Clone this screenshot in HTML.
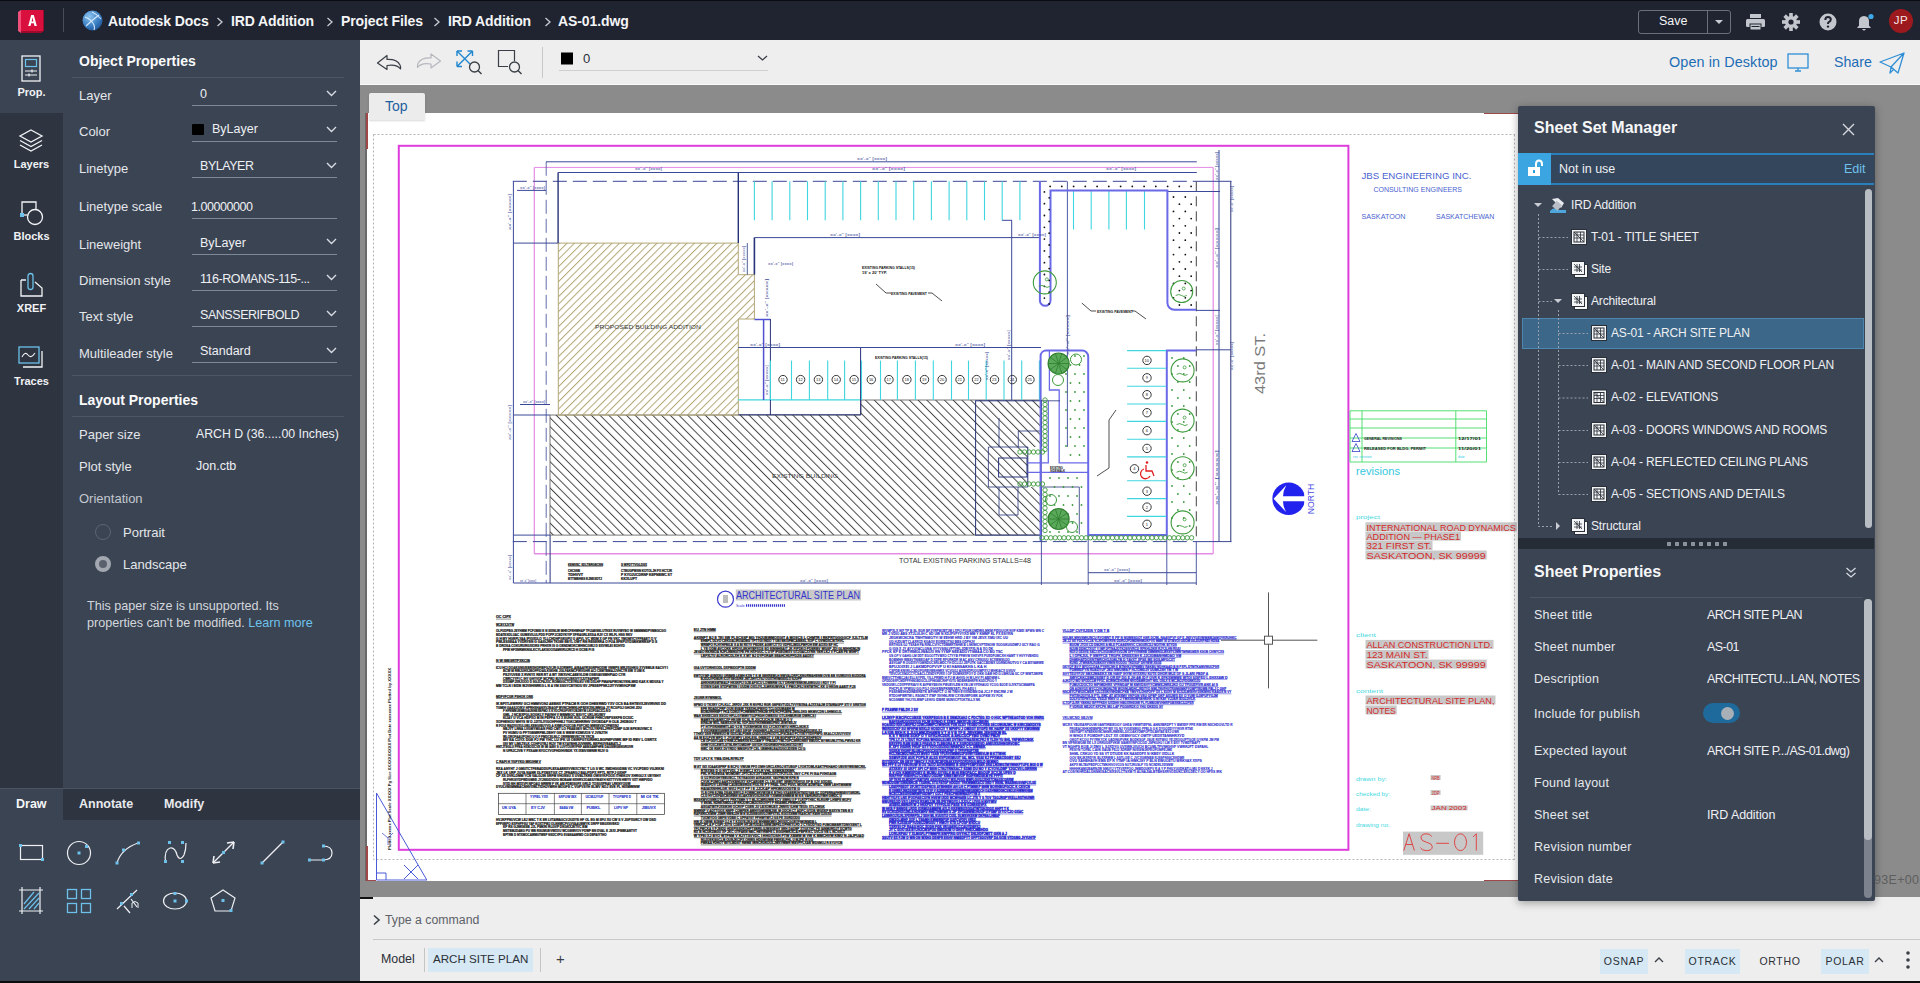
<!DOCTYPE html>
<html><head><meta charset="utf-8">
<style>
*{margin:0;padding:0;box-sizing:border-box}
html,body{width:1920px;height:983px;overflow:hidden;background:#8b8b8b;font-family:"Liberation Sans",sans-serif}
.a{position:absolute;white-space:nowrap}
#hdr{left:0;top:0;width:1920px;height:40px;background:#1f2430;border-top:1px solid #0b0d12}
.crumb{color:#f4f5f7;font-weight:bold;font-size:14px;top:12px;letter-spacing:-0.1px}
.chev{color:#c9ccd2;font-size:13px;top:12px}
#rail{left:0;top:40px;width:63px;height:748px;background:#2e3440}
#panel{left:63px;top:40px;width:297px;height:748px;background:#3b4453}
#ptabs{left:0;top:788px;width:360px;height:32px;background:#2e3440;border-top:1px solid #4a5361}
#pbot{left:0;top:820px;width:360px;height:163px;background:#3b4453}
.rl{color:#f0f2f5;font-size:11px;font-weight:bold;width:63px;text-align:center;left:0}
.lbl{color:#e3e6ea;font-size:13px;left:79px}
.val{color:#eef0f3;font-size:12.5px}
.dd{left:192px;width:145px;height:1px;background:#7f8896}
.sep{background:#4d5665;height:1px}
.h1{color:#fafbfc;font-weight:bold;font-size:14px;left:79px}
#tbar{left:360px;top:40px;width:1560px;height:45px;background:#eeeeee;border-bottom:1px solid #fafafa}
#canvas{left:360px;top:84px;width:1560px;height:813px;background:#8b8b8b}
#paper{left:366px;top:113px;width:1160px;height:768px;background:#ffffff}
#cmd{left:360px;top:897px;width:1560px;height:43px;background:#eeeeee}
#btm{left:360px;top:940px;width:1560px;height:41px;background:#eeeeee}
#ssm{left:1518px;top:106px;width:357px;height:795px;background:#3b4453;box-shadow:0 2px 8px rgba(0,0,0,0.35);border-radius:2px}
.tr{color:#eef0f3;font-size:12px;letter-spacing:-0.15px}
.spl{color:#e6e9ed;font-size:12.5px;left:16px;letter-spacing:0.25px}
.spv{color:#eef0f3;font-size:12.5px;left:189px}
.st{font-size:10.5px;color:#2b2f36;letter-spacing:0.7px;height:25px;line-height:25px;padding:0 6px}
</style></head><body>
<div id="canvas" class="a"></div>
<div id="paper" class="a"></div>
<div class="a" style="left:365px;top:113px;width:2px;height:768px;background:#6a6a6a"></div>
<div class="a" style="left:366px;top:113px;width:1.5px;height:36px;background:#a04848"></div>
<div class="a" style="left:366px;top:846px;width:1.5px;height:35px;background:#a04848"></div>
<div class="a" style="left:366px;top:879.5px;width:10px;height:1.5px;background:#a04848"></div>
<div class="a" style="left:1484px;top:112.5px;width:40px;height:1.5px;background:#a04848"></div>
<div class="a" style="left:1484px;top:879.5px;width:40px;height:1.5px;background:#a04848"></div>
<svg class="a" style="left:366px;top:113px" width="1152" height="768" viewBox="366 113 1152 768" font-family="Liberation Sans, sans-serif">
<path d="M373.5 134.5 H1515 M373.5 134.5 V859.5 H1515 M1514.5 134.5 V859.5" stroke="#b4b4b4" stroke-width="1.00" fill="none" stroke-dasharray="2 2"/>
<rect x="398.8" y="145.8" width="949.6" height="704.0" stroke="#dc3ddc" stroke-width="2.00" fill="none"/>
<defs>
<pattern id="hb" patternUnits="userSpaceOnUse" width="6.2" height="6.2" patternTransform="rotate(-45)"><line x1="0.5" y1="0" x2="0.5" y2="6.2" stroke="#404040" stroke-width="0.95"/></pattern>
<pattern id="ht" patternUnits="userSpaceOnUse" width="5.3" height="5.3" patternTransform="rotate(45)"><line x1="0.5" y1="0" x2="0.5" y2="5.3" stroke="#b3a877" stroke-width="1"/></pattern>
<pattern id="hb2" patternUnits="userSpaceOnUse" width="6.5" height="6.5" patternTransform="rotate(-45)"><line x1="0.5" y1="0" x2="0.5" y2="6.5" stroke="#404040" stroke-width="0.9"/></pattern>
</defs>
<path d="M550 415 H738.3 V415 H861 V400 H1041.4 V535.1 H550 Z" stroke="#555" stroke-width="0.80" fill="url(#hb)"/>
<path d="M558.3 243.1 H738.3 V274.7 H754.4 V319 H738.3 V415 H558.3 Z" stroke="#b3a877" stroke-width="1.00" fill="url(#ht)"/>
<rect x="975.6" y="400.8" width="65.8" height="134.3" stroke="#27327a" stroke-width="1.00" fill="none"/>
<path d="M1027.8 447 H1041.4 V487 H1027.8 Z" stroke="none" stroke-width="0.00" fill="#fff"/>
<path d="M1027.8 447 V487" stroke="#27327a" stroke-width="1.00" fill="none"/>
<rect x="998.6" y="458.0" width="28.4" height="19.0" stroke="#27327a" stroke-width="1.00" fill="none"/>
<path d="M988.4 447 H1027.8 M988.4 447 V487 H1027.8 M1018.3 431 V447 M1018.3 431 H1041 M999 418 V447 M999 487 V515 H1018 V487" stroke="#27327a" stroke-width="0.80" fill="none"/>
<path d="M738.3 399.9 H860.6" stroke="#3fd6df" stroke-width="1.30" fill="none"/>
<path d="M738.3 414.8 H860.6 V347.5" stroke="#27327a" stroke-width="1.00" fill="none"/>
<line x1="763.6" y1="319.0" x2="763.6" y2="400.0" stroke="#5050d0" stroke-width="1.50"/>
<line x1="754.4" y1="319.5" x2="770.4" y2="319.5" stroke="#5050d0" stroke-width="1.50"/>
<line x1="747.3" y1="243.1" x2="747.3" y2="274.7" stroke="#27327a" stroke-width="0.80"/>
<line x1="770.4" y1="319.0" x2="770.4" y2="415.0" stroke="#27327a" stroke-width="1.00"/>
<line x1="546.0" y1="161.8" x2="1196.8" y2="161.8" stroke="#3b4898" stroke-width="1.00"/>
<line x1="534.3" y1="167.4" x2="1213.2" y2="167.4" stroke="#e58ae5" stroke-width="1.00"/>
<line x1="534.3" y1="167.4" x2="534.3" y2="553.8" stroke="#e58ae5" stroke-width="1.20"/>
<line x1="1213.2" y1="167.4" x2="1213.2" y2="553.8" stroke="#e58ae5" stroke-width="1.20"/>
<line x1="534.3" y1="553.8" x2="1213.2" y2="553.8" stroke="#e58ae5" stroke-width="1.50"/>
<line x1="558.1" y1="172.5" x2="1196.8" y2="172.5" stroke="#3b4898" stroke-width="1.00"/>
<path d="M512.8 181.3 H1196.8" stroke="#3b4898" stroke-width="1.00" fill="none" stroke-dasharray="14 6"/>
<line x1="1196.8" y1="181.3" x2="1231.5" y2="181.3" stroke="#3b4898" stroke-width="1.00"/>
<path d="M1196.3 181.3 V541.6" stroke="#444" stroke-width="1.00" fill="none" stroke-dasharray="10 5"/>
<path d="M512.8 541.6 H1196.8" stroke="#3b4898" stroke-width="1.00" fill="none" stroke-dasharray="14 6"/>
<line x1="1196.8" y1="541.6" x2="1231.5" y2="541.6" stroke="#3b4898" stroke-width="1.00"/>
<path d="M546.2 161.8 V583" stroke="#3b4898" stroke-width="0.80" fill="none" stroke-dasharray="14 5"/>
<line x1="513.4" y1="181.3" x2="513.4" y2="583.0" stroke="#3b4898" stroke-width="1.00"/>
<line x1="1219.0" y1="150.0" x2="1219.0" y2="541.6" stroke="#3b4898" stroke-width="1.00"/>
<line x1="1230.8" y1="181.3" x2="1230.8" y2="541.6" stroke="#27327a" stroke-width="1.00"/>
<line x1="558.1" y1="172.5" x2="558.1" y2="243.1" stroke="#27327a" stroke-width="1.40"/>
<line x1="738.3" y1="172.5" x2="738.3" y2="243.1" stroke="#27327a" stroke-width="1.40"/>
<line x1="513.4" y1="243.1" x2="558.3" y2="243.1" stroke="#3b4898" stroke-width="1.00"/>
<line x1="513.4" y1="415.0" x2="550.0" y2="415.0" stroke="#3b4898" stroke-width="1.00"/>
<line x1="513.4" y1="535.1" x2="550.0" y2="535.1" stroke="#3b4898" stroke-width="1.00"/>
<line x1="550.1" y1="535.1" x2="550.1" y2="583.0" stroke="#27327a" stroke-width="1.00"/>
<line x1="517.0" y1="190.4" x2="546.0" y2="190.4" stroke="#3b4898" stroke-width="1.00"/>
<line x1="520.0" y1="404.5" x2="550.0" y2="404.5" stroke="#3b4898" stroke-width="1.00"/>
<line x1="513.4" y1="583.0" x2="1196.3" y2="583.0" stroke="#3b4898" stroke-width="1.00"/>
<line x1="1088.2" y1="572.7" x2="1196.1" y2="572.7" stroke="#3b4898" stroke-width="1.00"/>
<line x1="1041.4" y1="535.1" x2="1041.4" y2="585.0" stroke="#3b4898" stroke-width="0.90"/>
<line x1="1088.2" y1="535.1" x2="1088.2" y2="585.0" stroke="#3b4898" stroke-width="0.90"/>
<line x1="1166.8" y1="535.1" x2="1166.8" y2="585.0" stroke="#3b4898" stroke-width="0.90"/>
<line x1="1196.3" y1="541.6" x2="1196.3" y2="585.0" stroke="#3b4898" stroke-width="0.90"/>
<line x1="754.4" y1="237.6" x2="1039.2" y2="237.6" stroke="#3b4898" stroke-width="1.00"/>
<line x1="754.4" y1="237.6" x2="754.4" y2="274.7" stroke="#27327a" stroke-width="1.60"/>
<line x1="738.3" y1="347.5" x2="1041.0" y2="347.5" stroke="#3b4898" stroke-width="1.00"/>
<line x1="1011.7" y1="220.3" x2="1011.7" y2="400.0" stroke="#3b4898" stroke-width="1.00"/>
<line x1="1002.0" y1="220.3" x2="1012.0" y2="220.3" stroke="#3b4898" stroke-width="1.00"/>
<line x1="1067.4" y1="181.3" x2="1067.4" y2="447.0" stroke="#3b4898" stroke-width="0.90"/>
<line x1="1167.0" y1="191.5" x2="1220.0" y2="191.5" stroke="#3b4898" stroke-width="1.00"/>
<line x1="1196.0" y1="310.4" x2="1220.0" y2="310.4" stroke="#3b4898" stroke-width="1.00"/>
<line x1="1196.0" y1="349.8" x2="1231.0" y2="349.8" stroke="#3b4898" stroke-width="1.00"/>
<line x1="754.4" y1="181.3" x2="754.4" y2="220.3" stroke="#3fd6df" stroke-width="1.10"/>
<line x1="772.1" y1="181.3" x2="772.1" y2="220.3" stroke="#3fd6df" stroke-width="1.10"/>
<line x1="789.8" y1="181.3" x2="789.8" y2="220.3" stroke="#3fd6df" stroke-width="1.10"/>
<line x1="807.5" y1="181.3" x2="807.5" y2="220.3" stroke="#3fd6df" stroke-width="1.10"/>
<line x1="825.2" y1="181.3" x2="825.2" y2="220.3" stroke="#3fd6df" stroke-width="1.10"/>
<line x1="842.9" y1="181.3" x2="842.9" y2="220.3" stroke="#3fd6df" stroke-width="1.10"/>
<line x1="860.6" y1="181.3" x2="860.6" y2="220.3" stroke="#3fd6df" stroke-width="1.10"/>
<line x1="878.3" y1="181.3" x2="878.3" y2="220.3" stroke="#3fd6df" stroke-width="1.10"/>
<line x1="896.0" y1="181.3" x2="896.0" y2="220.3" stroke="#3fd6df" stroke-width="1.10"/>
<line x1="913.7" y1="181.3" x2="913.7" y2="220.3" stroke="#3fd6df" stroke-width="1.10"/>
<line x1="931.4" y1="181.3" x2="931.4" y2="220.3" stroke="#3fd6df" stroke-width="1.10"/>
<line x1="949.1" y1="181.3" x2="949.1" y2="220.3" stroke="#3fd6df" stroke-width="1.10"/>
<line x1="966.8" y1="181.3" x2="966.8" y2="220.3" stroke="#3fd6df" stroke-width="1.10"/>
<line x1="984.5" y1="181.3" x2="984.5" y2="220.3" stroke="#3fd6df" stroke-width="1.10"/>
<line x1="1002.2" y1="181.3" x2="1002.2" y2="220.3" stroke="#3fd6df" stroke-width="1.10"/>
<line x1="1019.9" y1="181.3" x2="1019.9" y2="220.3" stroke="#3fd6df" stroke-width="1.10"/>
<line x1="1073.5" y1="190.4" x2="1073.5" y2="229.5" stroke="#3fd6df" stroke-width="1.10"/>
<line x1="1091.2" y1="190.4" x2="1091.2" y2="229.5" stroke="#3fd6df" stroke-width="1.10"/>
<line x1="1108.9" y1="190.4" x2="1108.9" y2="229.5" stroke="#3fd6df" stroke-width="1.10"/>
<line x1="1126.4" y1="190.4" x2="1126.4" y2="229.5" stroke="#3fd6df" stroke-width="1.10"/>
<line x1="1144.5" y1="190.4" x2="1144.5" y2="229.5" stroke="#3fd6df" stroke-width="1.10"/>
<line x1="770.4" y1="360.6" x2="770.4" y2="399.9" stroke="#3fd6df" stroke-width="1.10"/>
<line x1="791.5" y1="360.6" x2="791.5" y2="399.9" stroke="#3fd6df" stroke-width="1.10"/>
<line x1="809.4" y1="360.6" x2="809.4" y2="399.9" stroke="#3fd6df" stroke-width="1.10"/>
<line x1="827.7" y1="360.6" x2="827.7" y2="399.9" stroke="#3fd6df" stroke-width="1.10"/>
<line x1="844.6" y1="360.6" x2="844.6" y2="399.9" stroke="#3fd6df" stroke-width="1.10"/>
<line x1="861.5" y1="360.6" x2="861.5" y2="399.9" stroke="#3fd6df" stroke-width="1.10"/>
<line x1="880.5" y1="360.6" x2="880.5" y2="399.9" stroke="#3fd6df" stroke-width="1.10"/>
<line x1="897.4" y1="360.6" x2="897.4" y2="399.9" stroke="#3fd6df" stroke-width="1.10"/>
<line x1="915.4" y1="360.6" x2="915.4" y2="399.9" stroke="#3fd6df" stroke-width="1.10"/>
<line x1="933.3" y1="360.6" x2="933.3" y2="399.9" stroke="#3fd6df" stroke-width="1.10"/>
<line x1="951.5" y1="360.6" x2="951.5" y2="399.9" stroke="#3fd6df" stroke-width="1.10"/>
<line x1="968.5" y1="360.6" x2="968.5" y2="399.9" stroke="#3fd6df" stroke-width="1.10"/>
<line x1="986.2" y1="360.6" x2="986.2" y2="399.9" stroke="#3fd6df" stroke-width="1.10"/>
<line x1="1004.0" y1="360.6" x2="1004.0" y2="399.9" stroke="#3fd6df" stroke-width="1.10"/>
<line x1="1021.7" y1="360.6" x2="1021.7" y2="399.9" stroke="#3fd6df" stroke-width="1.10"/>
<line x1="1039.4" y1="360.6" x2="1039.4" y2="399.9" stroke="#3fd6df" stroke-width="1.10"/>
<circle cx="783.0" cy="379.6" r="4.2" fill="none" stroke="#222" stroke-width="0.9"/>
<text x="780.6" y="381.4" font-size="4.0" fill="#222">11</text>
<circle cx="800.6" cy="379.6" r="4.2" fill="none" stroke="#222" stroke-width="0.9"/>
<text x="798.2" y="381.4" font-size="4.0" fill="#222">12</text>
<circle cx="818.4" cy="379.6" r="4.2" fill="none" stroke="#222" stroke-width="0.9"/>
<text x="816.0" y="381.4" font-size="4.0" fill="#222">13</text>
<circle cx="836.2" cy="379.6" r="4.2" fill="none" stroke="#222" stroke-width="0.9"/>
<text x="833.8" y="381.4" font-size="4.0" fill="#222">14</text>
<circle cx="854.1" cy="379.6" r="4.2" fill="none" stroke="#222" stroke-width="0.9"/>
<text x="851.7" y="381.4" font-size="4.0" fill="#222">15</text>
<circle cx="871.3" cy="379.6" r="4.2" fill="none" stroke="#222" stroke-width="0.9"/>
<text x="868.9" y="381.4" font-size="4.0" fill="#222">16</text>
<circle cx="889.0" cy="379.6" r="4.2" fill="none" stroke="#222" stroke-width="0.9"/>
<text x="886.6" y="381.4" font-size="4.0" fill="#222">17</text>
<circle cx="906.9" cy="379.6" r="4.2" fill="none" stroke="#222" stroke-width="0.9"/>
<text x="904.5" y="381.4" font-size="4.0" fill="#222">18</text>
<circle cx="924.5" cy="379.6" r="4.2" fill="none" stroke="#222" stroke-width="0.9"/>
<text x="922.1" y="381.4" font-size="4.0" fill="#222">19</text>
<circle cx="942.1" cy="379.6" r="4.2" fill="none" stroke="#222" stroke-width="0.9"/>
<text x="939.7" y="381.4" font-size="4.0" fill="#222">20</text>
<circle cx="960.0" cy="379.6" r="4.2" fill="none" stroke="#222" stroke-width="0.9"/>
<text x="957.6" y="381.4" font-size="4.0" fill="#222">21</text>
<circle cx="976.6" cy="379.6" r="4.2" fill="none" stroke="#222" stroke-width="0.9"/>
<text x="974.2" y="381.4" font-size="4.0" fill="#222">22</text>
<circle cx="994.5" cy="379.6" r="4.2" fill="none" stroke="#222" stroke-width="0.9"/>
<text x="992.1" y="381.4" font-size="4.0" fill="#222">23</text>
<circle cx="1012.3" cy="379.6" r="4.2" fill="none" stroke="#222" stroke-width="0.9"/>
<text x="1009.9" y="381.4" font-size="4.0" fill="#222">24</text>
<circle cx="1030.0" cy="379.6" r="4.2" fill="none" stroke="#222" stroke-width="0.9"/>
<text x="1027.6" y="381.4" font-size="4.0" fill="#222">25</text>
<path d="M1039.9 181.3 V300.5 A5.3 5.3 0 0 0 1050.5 300.5 V190.4 H1167.4 V302.7 A7 7 0 0 0 1174.4 309.8 H1196" stroke="#6a6ae8" stroke-width="2.00" fill="none"/>
<path d="M1040.6 541 V356 A5.5 5.5 0 0 1 1046 350.6 H1082 A6 6 0 0 1 1088.2 356.6 V535.1 H1166.8 V350.6 H1196" stroke="#6a6ae8" stroke-width="2.00" fill="none"/>
<path d="M1049.4 350.6 V390 H1059.2 V462.8 H1088.2 M1027.8 472.3 H1088.2 M1027.8 462.8 H1048.3 V400.8" stroke="#6a6ae8" stroke-width="1.30" fill="none"/>
<path d="M1042 487 H1079.3 V534.3" stroke="#27327a" stroke-width="0.80" fill="none"/>
<path d="M1040.6 400.8 H1060" stroke="#27327a" stroke-width="0.80" fill="none"/>
<circle cx="1044.4" cy="191.9" r="0.9" fill="#111"/>
<circle cx="1049.2" cy="197.8" r="0.9" fill="#111"/>
<circle cx="1044.4" cy="203.7" r="0.9" fill="#111"/>
<circle cx="1049.2" cy="209.6" r="0.9" fill="#111"/>
<circle cx="1044.4" cy="215.5" r="0.9" fill="#111"/>
<circle cx="1049.2" cy="221.4" r="0.9" fill="#111"/>
<circle cx="1044.4" cy="227.3" r="0.9" fill="#111"/>
<circle cx="1049.2" cy="233.2" r="0.9" fill="#111"/>
<circle cx="1044.4" cy="239.1" r="0.9" fill="#111"/>
<circle cx="1049.2" cy="245.0" r="0.9" fill="#111"/>
<circle cx="1044.4" cy="250.9" r="0.9" fill="#111"/>
<circle cx="1049.2" cy="256.8" r="0.9" fill="#111"/>
<circle cx="1044.4" cy="262.7" r="0.9" fill="#111"/>
<circle cx="1049.2" cy="268.6" r="0.9" fill="#111"/>
<circle cx="1044.4" cy="274.5" r="0.9" fill="#111"/>
<circle cx="1049.2" cy="280.4" r="0.9" fill="#111"/>
<circle cx="1044.4" cy="286.3" r="0.9" fill="#111"/>
<circle cx="1049.2" cy="292.2" r="0.9" fill="#111"/>
<circle cx="1044.4" cy="298.1" r="0.9" fill="#111"/>
<circle cx="1049.2" cy="304.0" r="0.9" fill="#111"/>
<circle cx="1050.1" cy="186.4" r="0.9" fill="#111"/>
<circle cx="1061.8" cy="186.4" r="0.9" fill="#111"/>
<circle cx="1073.6" cy="186.4" r="0.9" fill="#111"/>
<circle cx="1085.3" cy="186.4" r="0.9" fill="#111"/>
<circle cx="1097.1" cy="186.4" r="0.9" fill="#111"/>
<circle cx="1108.8" cy="186.4" r="0.9" fill="#111"/>
<circle cx="1120.6" cy="186.4" r="0.9" fill="#111"/>
<circle cx="1132.3" cy="186.4" r="0.9" fill="#111"/>
<circle cx="1144.1" cy="186.4" r="0.9" fill="#111"/>
<circle cx="1155.8" cy="186.4" r="0.9" fill="#111"/>
<circle cx="1167.6" cy="186.4" r="0.9" fill="#111"/>
<circle cx="1179.3" cy="186.4" r="0.9" fill="#111"/>
<circle cx="1191.1" cy="186.4" r="0.9" fill="#111"/>
<circle cx="1173.5" cy="197.0" r="0.9" fill="#111"/>
<circle cx="1185.3" cy="197.0" r="0.9" fill="#111"/>
<circle cx="1179.4" cy="204.2" r="0.9" fill="#111"/>
<circle cx="1191.2" cy="204.2" r="0.9" fill="#111"/>
<circle cx="1173.5" cy="211.4" r="0.9" fill="#111"/>
<circle cx="1185.3" cy="211.4" r="0.9" fill="#111"/>
<circle cx="1179.4" cy="218.6" r="0.9" fill="#111"/>
<circle cx="1191.2" cy="218.6" r="0.9" fill="#111"/>
<circle cx="1173.5" cy="225.8" r="0.9" fill="#111"/>
<circle cx="1185.3" cy="225.8" r="0.9" fill="#111"/>
<circle cx="1179.4" cy="233.0" r="0.9" fill="#111"/>
<circle cx="1191.2" cy="233.0" r="0.9" fill="#111"/>
<circle cx="1173.5" cy="240.2" r="0.9" fill="#111"/>
<circle cx="1185.3" cy="240.2" r="0.9" fill="#111"/>
<circle cx="1179.4" cy="247.4" r="0.9" fill="#111"/>
<circle cx="1191.2" cy="247.4" r="0.9" fill="#111"/>
<circle cx="1173.5" cy="254.6" r="0.9" fill="#111"/>
<circle cx="1185.3" cy="254.6" r="0.9" fill="#111"/>
<circle cx="1179.4" cy="261.8" r="0.9" fill="#111"/>
<circle cx="1191.2" cy="261.8" r="0.9" fill="#111"/>
<circle cx="1173.5" cy="269.0" r="0.9" fill="#111"/>
<circle cx="1185.3" cy="269.0" r="0.9" fill="#111"/>
<circle cx="1179.4" cy="276.2" r="0.9" fill="#111"/>
<circle cx="1191.2" cy="276.2" r="0.9" fill="#111"/>
<circle cx="1173.5" cy="283.4" r="0.9" fill="#111"/>
<circle cx="1185.3" cy="283.4" r="0.9" fill="#111"/>
<circle cx="1179.4" cy="290.6" r="0.9" fill="#111"/>
<circle cx="1191.2" cy="290.6" r="0.9" fill="#111"/>
<circle cx="1173.5" cy="297.8" r="0.9" fill="#111"/>
<circle cx="1185.3" cy="297.8" r="0.9" fill="#111"/>
<circle cx="1179.4" cy="305.0" r="0.9" fill="#111"/>
<circle cx="1191.2" cy="305.0" r="0.9" fill="#111"/>
<circle cx="1066.0" cy="356.0" r="0.9" fill="#3d9a3d"/>
<circle cx="1075.0" cy="356.0" r="0.9" fill="#3d9a3d"/>
<circle cx="1084.0" cy="356.0" r="0.9" fill="#3d9a3d"/>
<circle cx="1070.5" cy="365.0" r="0.9" fill="#3d9a3d"/>
<circle cx="1079.5" cy="365.0" r="0.9" fill="#3d9a3d"/>
<circle cx="1066.0" cy="374.0" r="0.9" fill="#3d9a3d"/>
<circle cx="1075.0" cy="374.0" r="0.9" fill="#3d9a3d"/>
<circle cx="1084.0" cy="374.0" r="0.9" fill="#3d9a3d"/>
<circle cx="1070.5" cy="383.0" r="0.9" fill="#3d9a3d"/>
<circle cx="1079.5" cy="383.0" r="0.9" fill="#3d9a3d"/>
<circle cx="1066.0" cy="392.0" r="0.9" fill="#3d9a3d"/>
<circle cx="1075.0" cy="392.0" r="0.9" fill="#3d9a3d"/>
<circle cx="1084.0" cy="392.0" r="0.9" fill="#3d9a3d"/>
<circle cx="1070.5" cy="401.0" r="0.9" fill="#3d9a3d"/>
<circle cx="1079.5" cy="401.0" r="0.9" fill="#3d9a3d"/>
<circle cx="1066.0" cy="410.0" r="0.9" fill="#3d9a3d"/>
<circle cx="1075.0" cy="410.0" r="0.9" fill="#3d9a3d"/>
<circle cx="1084.0" cy="410.0" r="0.9" fill="#3d9a3d"/>
<circle cx="1070.5" cy="419.0" r="0.9" fill="#3d9a3d"/>
<circle cx="1079.5" cy="419.0" r="0.9" fill="#3d9a3d"/>
<circle cx="1066.0" cy="428.0" r="0.9" fill="#3d9a3d"/>
<circle cx="1075.0" cy="428.0" r="0.9" fill="#3d9a3d"/>
<circle cx="1084.0" cy="428.0" r="0.9" fill="#3d9a3d"/>
<circle cx="1070.5" cy="437.0" r="0.9" fill="#3d9a3d"/>
<circle cx="1079.5" cy="437.0" r="0.9" fill="#3d9a3d"/>
<circle cx="1066.0" cy="446.0" r="0.9" fill="#3d9a3d"/>
<circle cx="1075.0" cy="446.0" r="0.9" fill="#3d9a3d"/>
<circle cx="1084.0" cy="446.0" r="0.9" fill="#3d9a3d"/>
<circle cx="1070.5" cy="455.0" r="0.9" fill="#3d9a3d"/>
<circle cx="1079.5" cy="455.0" r="0.9" fill="#3d9a3d"/>
<circle cx="1172.0" cy="358.0" r="0.9" fill="#3d9a3d"/>
<circle cx="1183.8" cy="358.0" r="0.9" fill="#3d9a3d"/>
<circle cx="1177.9" cy="366.0" r="0.9" fill="#3d9a3d"/>
<circle cx="1189.7" cy="366.0" r="0.9" fill="#3d9a3d"/>
<circle cx="1172.0" cy="374.0" r="0.9" fill="#3d9a3d"/>
<circle cx="1183.8" cy="374.0" r="0.9" fill="#3d9a3d"/>
<circle cx="1177.9" cy="382.0" r="0.9" fill="#3d9a3d"/>
<circle cx="1189.7" cy="382.0" r="0.9" fill="#3d9a3d"/>
<circle cx="1172.0" cy="390.0" r="0.9" fill="#3d9a3d"/>
<circle cx="1183.8" cy="390.0" r="0.9" fill="#3d9a3d"/>
<circle cx="1177.9" cy="398.0" r="0.9" fill="#3d9a3d"/>
<circle cx="1189.7" cy="398.0" r="0.9" fill="#3d9a3d"/>
<circle cx="1172.0" cy="406.0" r="0.9" fill="#3d9a3d"/>
<circle cx="1183.8" cy="406.0" r="0.9" fill="#3d9a3d"/>
<circle cx="1177.9" cy="414.0" r="0.9" fill="#3d9a3d"/>
<circle cx="1189.7" cy="414.0" r="0.9" fill="#3d9a3d"/>
<circle cx="1172.0" cy="422.0" r="0.9" fill="#3d9a3d"/>
<circle cx="1183.8" cy="422.0" r="0.9" fill="#3d9a3d"/>
<circle cx="1177.9" cy="430.0" r="0.9" fill="#3d9a3d"/>
<circle cx="1189.7" cy="430.0" r="0.9" fill="#3d9a3d"/>
<circle cx="1172.0" cy="438.0" r="0.9" fill="#3d9a3d"/>
<circle cx="1183.8" cy="438.0" r="0.9" fill="#3d9a3d"/>
<circle cx="1177.9" cy="446.0" r="0.9" fill="#3d9a3d"/>
<circle cx="1189.7" cy="446.0" r="0.9" fill="#3d9a3d"/>
<circle cx="1172.0" cy="454.0" r="0.9" fill="#3d9a3d"/>
<circle cx="1183.8" cy="454.0" r="0.9" fill="#3d9a3d"/>
<circle cx="1177.9" cy="462.0" r="0.9" fill="#3d9a3d"/>
<circle cx="1189.7" cy="462.0" r="0.9" fill="#3d9a3d"/>
<circle cx="1172.0" cy="470.0" r="0.9" fill="#3d9a3d"/>
<circle cx="1183.8" cy="470.0" r="0.9" fill="#3d9a3d"/>
<circle cx="1177.9" cy="478.0" r="0.9" fill="#3d9a3d"/>
<circle cx="1189.7" cy="478.0" r="0.9" fill="#3d9a3d"/>
<circle cx="1172.0" cy="486.0" r="0.9" fill="#3d9a3d"/>
<circle cx="1183.8" cy="486.0" r="0.9" fill="#3d9a3d"/>
<circle cx="1177.9" cy="494.0" r="0.9" fill="#3d9a3d"/>
<circle cx="1189.7" cy="494.0" r="0.9" fill="#3d9a3d"/>
<circle cx="1172.0" cy="502.0" r="0.9" fill="#3d9a3d"/>
<circle cx="1183.8" cy="502.0" r="0.9" fill="#3d9a3d"/>
<circle cx="1177.9" cy="510.0" r="0.9" fill="#3d9a3d"/>
<circle cx="1189.7" cy="510.0" r="0.9" fill="#3d9a3d"/>
<circle cx="1172.0" cy="518.0" r="0.9" fill="#3d9a3d"/>
<circle cx="1183.8" cy="518.0" r="0.9" fill="#3d9a3d"/>
<circle cx="1177.9" cy="526.0" r="0.9" fill="#3d9a3d"/>
<circle cx="1189.7" cy="526.0" r="0.9" fill="#3d9a3d"/>
<circle cx="1050.0" cy="478.0" r="0.9" fill="#3d9a3d"/>
<circle cx="1059.0" cy="478.0" r="0.9" fill="#3d9a3d"/>
<circle cx="1068.0" cy="478.0" r="0.9" fill="#3d9a3d"/>
<circle cx="1077.0" cy="478.0" r="0.9" fill="#3d9a3d"/>
<circle cx="1054.5" cy="487.0" r="0.9" fill="#3d9a3d"/>
<circle cx="1063.5" cy="487.0" r="0.9" fill="#3d9a3d"/>
<circle cx="1072.5" cy="487.0" r="0.9" fill="#3d9a3d"/>
<circle cx="1081.5" cy="487.0" r="0.9" fill="#3d9a3d"/>
<circle cx="1050.0" cy="496.0" r="0.9" fill="#3d9a3d"/>
<circle cx="1059.0" cy="496.0" r="0.9" fill="#3d9a3d"/>
<circle cx="1068.0" cy="496.0" r="0.9" fill="#3d9a3d"/>
<circle cx="1077.0" cy="496.0" r="0.9" fill="#3d9a3d"/>
<circle cx="1054.5" cy="505.0" r="0.9" fill="#3d9a3d"/>
<circle cx="1063.5" cy="505.0" r="0.9" fill="#3d9a3d"/>
<circle cx="1072.5" cy="505.0" r="0.9" fill="#3d9a3d"/>
<circle cx="1081.5" cy="505.0" r="0.9" fill="#3d9a3d"/>
<circle cx="1050.0" cy="514.0" r="0.9" fill="#3d9a3d"/>
<circle cx="1059.0" cy="514.0" r="0.9" fill="#3d9a3d"/>
<circle cx="1068.0" cy="514.0" r="0.9" fill="#3d9a3d"/>
<circle cx="1077.0" cy="514.0" r="0.9" fill="#3d9a3d"/>
<circle cx="1054.5" cy="523.0" r="0.9" fill="#3d9a3d"/>
<circle cx="1063.5" cy="523.0" r="0.9" fill="#3d9a3d"/>
<circle cx="1072.5" cy="523.0" r="0.9" fill="#3d9a3d"/>
<circle cx="1081.5" cy="523.0" r="0.9" fill="#3d9a3d"/>
<circle cx="1050.0" cy="532.0" r="0.9" fill="#3d9a3d"/>
<circle cx="1059.0" cy="532.0" r="0.9" fill="#3d9a3d"/>
<circle cx="1068.0" cy="532.0" r="0.9" fill="#3d9a3d"/>
<circle cx="1077.0" cy="532.0" r="0.9" fill="#3d9a3d"/>
<circle cx="1044.8" cy="282.4" r="11.5" fill="none" stroke="#3d9a3d" stroke-width="1.1"/>
<path d="M1038.8 286.4 q3 -2 6 0 q2 2 5 0" stroke="#3d9a3d" stroke-width="0.90" fill="none"/>
<circle cx="1046.8" cy="279.4" r="1.5" fill="none" stroke="#3d9a3d" stroke-width="0.8"/>
<circle cx="1181.7" cy="291.5" r="11.0" fill="none" stroke="#3d9a3d" stroke-width="1.1"/>
<path d="M1175.7 295.5 q3 -2 6 0 q2 2 5 0" stroke="#3d9a3d" stroke-width="0.90" fill="none"/>
<circle cx="1183.7" cy="288.5" r="1.5" fill="none" stroke="#3d9a3d" stroke-width="0.8"/>
<circle cx="1182.6" cy="370.4" r="11.5" fill="none" stroke="#3d9a3d" stroke-width="1.1"/>
<path d="M1176.6 374.4 q3 -2 6 0 q2 2 5 0" stroke="#3d9a3d" stroke-width="0.90" fill="none"/>
<circle cx="1184.6" cy="367.4" r="1.5" fill="none" stroke="#3d9a3d" stroke-width="0.8"/>
<circle cx="1182.6" cy="420.6" r="11.5" fill="none" stroke="#3d9a3d" stroke-width="1.1"/>
<path d="M1176.6 424.6 q3 -2 6 0 q2 2 5 0" stroke="#3d9a3d" stroke-width="0.90" fill="none"/>
<circle cx="1184.6" cy="417.6" r="1.5" fill="none" stroke="#3d9a3d" stroke-width="0.8"/>
<circle cx="1182.6" cy="468.2" r="11.5" fill="none" stroke="#3d9a3d" stroke-width="1.1"/>
<path d="M1176.6 472.2 q3 -2 6 0 q2 2 5 0" stroke="#3d9a3d" stroke-width="0.90" fill="none"/>
<circle cx="1184.6" cy="465.2" r="1.5" fill="none" stroke="#3d9a3d" stroke-width="0.8"/>
<circle cx="1182.6" cy="522.4" r="11.5" fill="none" stroke="#3d9a3d" stroke-width="1.1"/>
<path d="M1176.6 526.4 q3 -2 6 0 q2 2 5 0" stroke="#3d9a3d" stroke-width="0.90" fill="none"/>
<circle cx="1184.6" cy="519.4" r="1.5" fill="none" stroke="#3d9a3d" stroke-width="0.8"/>
<circle cx="1058.6" cy="363.5" r="10.5" fill="#5aa85a" stroke="#2f7f2f" stroke-width="1.2"/>
<line x1="1058.6" y1="363.5" x2="1069.1" y2="363.5" stroke="#2f7f2f" stroke-width="0.80"/>
<line x1="1058.6" y1="363.5" x2="1067.1" y2="369.7" stroke="#2f7f2f" stroke-width="0.80"/>
<line x1="1058.6" y1="363.5" x2="1061.8" y2="373.5" stroke="#2f7f2f" stroke-width="0.80"/>
<line x1="1058.6" y1="363.5" x2="1055.4" y2="373.5" stroke="#2f7f2f" stroke-width="0.80"/>
<line x1="1058.6" y1="363.5" x2="1050.1" y2="369.7" stroke="#2f7f2f" stroke-width="0.80"/>
<line x1="1058.6" y1="363.5" x2="1048.1" y2="363.5" stroke="#2f7f2f" stroke-width="0.80"/>
<line x1="1058.6" y1="363.5" x2="1050.1" y2="357.3" stroke="#2f7f2f" stroke-width="0.80"/>
<line x1="1058.6" y1="363.5" x2="1055.4" y2="353.5" stroke="#2f7f2f" stroke-width="0.80"/>
<line x1="1058.6" y1="363.5" x2="1061.8" y2="353.5" stroke="#2f7f2f" stroke-width="0.80"/>
<line x1="1058.6" y1="363.5" x2="1067.1" y2="357.3" stroke="#2f7f2f" stroke-width="0.80"/>
<circle cx="1058.6" cy="519.0" r="10.5" fill="#5aa85a" stroke="#2f7f2f" stroke-width="1.2"/>
<line x1="1058.6" y1="519.0" x2="1069.1" y2="519.0" stroke="#2f7f2f" stroke-width="0.80"/>
<line x1="1058.6" y1="519.0" x2="1067.1" y2="525.2" stroke="#2f7f2f" stroke-width="0.80"/>
<line x1="1058.6" y1="519.0" x2="1061.8" y2="529.0" stroke="#2f7f2f" stroke-width="0.80"/>
<line x1="1058.6" y1="519.0" x2="1055.4" y2="529.0" stroke="#2f7f2f" stroke-width="0.80"/>
<line x1="1058.6" y1="519.0" x2="1050.1" y2="525.2" stroke="#2f7f2f" stroke-width="0.80"/>
<line x1="1058.6" y1="519.0" x2="1048.1" y2="519.0" stroke="#2f7f2f" stroke-width="0.80"/>
<line x1="1058.6" y1="519.0" x2="1050.1" y2="512.8" stroke="#2f7f2f" stroke-width="0.80"/>
<line x1="1058.6" y1="519.0" x2="1055.4" y2="509.0" stroke="#2f7f2f" stroke-width="0.80"/>
<line x1="1058.6" y1="519.0" x2="1061.8" y2="509.0" stroke="#2f7f2f" stroke-width="0.80"/>
<line x1="1058.6" y1="519.0" x2="1067.1" y2="512.8" stroke="#2f7f2f" stroke-width="0.80"/>
<circle cx="1076.0" cy="359.5" r="5.5" fill="none" stroke="#3d9a3d" stroke-width="1"/>
<circle cx="1058.0" cy="380.0" r="5.5" fill="none" stroke="#3d9a3d" stroke-width="1"/>
<circle cx="1051.0" cy="500.0" r="5.5" fill="none" stroke="#3d9a3d" stroke-width="1"/>
<circle cx="1072.0" cy="527.0" r="5.5" fill="none" stroke="#3d9a3d" stroke-width="1"/>
<circle cx="1045.0" cy="400.0" r="2.2" fill="none" stroke="#3d9a3d" stroke-width="0.9"/>
<circle cx="1045.0" cy="404.5" r="2.2" fill="none" stroke="#3d9a3d" stroke-width="0.9"/>
<circle cx="1045.0" cy="409.0" r="2.2" fill="none" stroke="#3d9a3d" stroke-width="0.9"/>
<circle cx="1045.0" cy="413.5" r="2.2" fill="none" stroke="#3d9a3d" stroke-width="0.9"/>
<circle cx="1045.0" cy="418.0" r="2.2" fill="none" stroke="#3d9a3d" stroke-width="0.9"/>
<circle cx="1045.0" cy="422.5" r="2.2" fill="none" stroke="#3d9a3d" stroke-width="0.9"/>
<circle cx="1045.0" cy="427.0" r="2.2" fill="none" stroke="#3d9a3d" stroke-width="0.9"/>
<circle cx="1045.0" cy="431.5" r="2.2" fill="none" stroke="#3d9a3d" stroke-width="0.9"/>
<circle cx="1045.0" cy="436.0" r="2.2" fill="none" stroke="#3d9a3d" stroke-width="0.9"/>
<circle cx="1045.0" cy="440.5" r="2.2" fill="none" stroke="#3d9a3d" stroke-width="0.9"/>
<circle cx="1045.0" cy="445.0" r="2.2" fill="none" stroke="#3d9a3d" stroke-width="0.9"/>
<circle cx="1045.0" cy="449.5" r="2.2" fill="none" stroke="#3d9a3d" stroke-width="0.9"/>
<circle cx="1020.0" cy="452.0" r="2.2" fill="none" stroke="#3d9a3d" stroke-width="0.9"/>
<circle cx="1024.5" cy="452.0" r="2.2" fill="none" stroke="#3d9a3d" stroke-width="0.9"/>
<circle cx="1029.0" cy="452.0" r="2.2" fill="none" stroke="#3d9a3d" stroke-width="0.9"/>
<circle cx="1033.5" cy="452.0" r="2.2" fill="none" stroke="#3d9a3d" stroke-width="0.9"/>
<circle cx="1038.0" cy="452.0" r="2.2" fill="none" stroke="#3d9a3d" stroke-width="0.9"/>
<circle cx="1042.5" cy="452.0" r="2.2" fill="none" stroke="#3d9a3d" stroke-width="0.9"/>
<circle cx="1020.0" cy="484.0" r="2.2" fill="none" stroke="#3d9a3d" stroke-width="0.9"/>
<circle cx="1024.5" cy="484.0" r="2.2" fill="none" stroke="#3d9a3d" stroke-width="0.9"/>
<circle cx="1029.0" cy="484.0" r="2.2" fill="none" stroke="#3d9a3d" stroke-width="0.9"/>
<circle cx="1033.5" cy="484.0" r="2.2" fill="none" stroke="#3d9a3d" stroke-width="0.9"/>
<circle cx="1038.0" cy="484.0" r="2.2" fill="none" stroke="#3d9a3d" stroke-width="0.9"/>
<circle cx="1042.5" cy="484.0" r="2.2" fill="none" stroke="#3d9a3d" stroke-width="0.9"/>
<circle cx="1045.0" cy="490.0" r="2.2" fill="none" stroke="#3d9a3d" stroke-width="0.9"/>
<circle cx="1045.0" cy="494.5" r="2.2" fill="none" stroke="#3d9a3d" stroke-width="0.9"/>
<circle cx="1045.0" cy="499.0" r="2.2" fill="none" stroke="#3d9a3d" stroke-width="0.9"/>
<circle cx="1045.0" cy="503.5" r="2.2" fill="none" stroke="#3d9a3d" stroke-width="0.9"/>
<circle cx="1045.0" cy="508.0" r="2.2" fill="none" stroke="#3d9a3d" stroke-width="0.9"/>
<circle cx="1045.0" cy="512.5" r="2.2" fill="none" stroke="#3d9a3d" stroke-width="0.9"/>
<circle cx="1045.0" cy="517.0" r="2.2" fill="none" stroke="#3d9a3d" stroke-width="0.9"/>
<circle cx="1045.0" cy="521.5" r="2.2" fill="none" stroke="#3d9a3d" stroke-width="0.9"/>
<circle cx="1045.0" cy="526.0" r="2.2" fill="none" stroke="#3d9a3d" stroke-width="0.9"/>
<circle cx="1045.0" cy="530.5" r="2.2" fill="none" stroke="#3d9a3d" stroke-width="0.9"/>
<circle cx="1042.0" cy="537.8" r="2.2" fill="none" stroke="#3d9a3d" stroke-width="0.9"/>
<circle cx="1046.4" cy="537.8" r="2.2" fill="none" stroke="#3d9a3d" stroke-width="0.9"/>
<circle cx="1050.8" cy="537.8" r="2.2" fill="none" stroke="#3d9a3d" stroke-width="0.9"/>
<circle cx="1055.2" cy="537.8" r="2.2" fill="none" stroke="#3d9a3d" stroke-width="0.9"/>
<circle cx="1059.6" cy="537.8" r="2.2" fill="none" stroke="#3d9a3d" stroke-width="0.9"/>
<circle cx="1064.0" cy="537.8" r="2.2" fill="none" stroke="#3d9a3d" stroke-width="0.9"/>
<circle cx="1068.4" cy="537.8" r="2.2" fill="none" stroke="#3d9a3d" stroke-width="0.9"/>
<circle cx="1072.8" cy="537.8" r="2.2" fill="none" stroke="#3d9a3d" stroke-width="0.9"/>
<circle cx="1077.2" cy="537.8" r="2.2" fill="none" stroke="#3d9a3d" stroke-width="0.9"/>
<circle cx="1081.6" cy="537.8" r="2.2" fill="none" stroke="#3d9a3d" stroke-width="0.9"/>
<circle cx="1086.0" cy="537.8" r="2.2" fill="none" stroke="#3d9a3d" stroke-width="0.9"/>
<circle cx="1090.4" cy="537.8" r="2.2" fill="none" stroke="#3d9a3d" stroke-width="0.9"/>
<circle cx="1094.8" cy="537.8" r="2.2" fill="none" stroke="#3d9a3d" stroke-width="0.9"/>
<circle cx="1099.2" cy="537.8" r="2.2" fill="none" stroke="#3d9a3d" stroke-width="0.9"/>
<circle cx="1103.6" cy="537.8" r="2.2" fill="none" stroke="#3d9a3d" stroke-width="0.9"/>
<circle cx="1108.0" cy="537.8" r="2.2" fill="none" stroke="#3d9a3d" stroke-width="0.9"/>
<circle cx="1112.4" cy="537.8" r="2.2" fill="none" stroke="#3d9a3d" stroke-width="0.9"/>
<circle cx="1116.8" cy="537.8" r="2.2" fill="none" stroke="#3d9a3d" stroke-width="0.9"/>
<circle cx="1121.2" cy="537.8" r="2.2" fill="none" stroke="#3d9a3d" stroke-width="0.9"/>
<circle cx="1125.6" cy="537.8" r="2.2" fill="none" stroke="#3d9a3d" stroke-width="0.9"/>
<circle cx="1130.0" cy="537.8" r="2.2" fill="none" stroke="#3d9a3d" stroke-width="0.9"/>
<circle cx="1134.4" cy="537.8" r="2.2" fill="none" stroke="#3d9a3d" stroke-width="0.9"/>
<circle cx="1138.8" cy="537.8" r="2.2" fill="none" stroke="#3d9a3d" stroke-width="0.9"/>
<circle cx="1143.2" cy="537.8" r="2.2" fill="none" stroke="#3d9a3d" stroke-width="0.9"/>
<circle cx="1147.6" cy="537.8" r="2.2" fill="none" stroke="#3d9a3d" stroke-width="0.9"/>
<circle cx="1152.0" cy="537.8" r="2.2" fill="none" stroke="#3d9a3d" stroke-width="0.9"/>
<circle cx="1156.4" cy="537.8" r="2.2" fill="none" stroke="#3d9a3d" stroke-width="0.9"/>
<circle cx="1160.8" cy="537.8" r="2.2" fill="none" stroke="#3d9a3d" stroke-width="0.9"/>
<circle cx="1165.2" cy="537.8" r="2.2" fill="none" stroke="#3d9a3d" stroke-width="0.9"/>
<circle cx="1169.6" cy="537.8" r="2.2" fill="none" stroke="#3d9a3d" stroke-width="0.9"/>
<circle cx="1174.0" cy="537.8" r="2.2" fill="none" stroke="#3d9a3d" stroke-width="0.9"/>
<circle cx="1178.4" cy="537.8" r="2.2" fill="none" stroke="#3d9a3d" stroke-width="0.9"/>
<circle cx="1182.8" cy="537.8" r="2.2" fill="none" stroke="#3d9a3d" stroke-width="0.9"/>
<circle cx="1187.2" cy="537.8" r="2.2" fill="none" stroke="#3d9a3d" stroke-width="0.9"/>
<circle cx="1191.6" cy="537.8" r="2.2" fill="none" stroke="#3d9a3d" stroke-width="0.9"/>
<line x1="1127.1" y1="350.6" x2="1166.2" y2="350.6" stroke="#3fd6df" stroke-width="1.10"/>
<line x1="1127.1" y1="368.3" x2="1166.2" y2="368.3" stroke="#3fd6df" stroke-width="1.10"/>
<line x1="1127.1" y1="386.3" x2="1166.2" y2="386.3" stroke="#3fd6df" stroke-width="1.10"/>
<line x1="1127.1" y1="404.0" x2="1166.2" y2="404.0" stroke="#3fd6df" stroke-width="1.10"/>
<line x1="1127.1" y1="421.4" x2="1166.2" y2="421.4" stroke="#3fd6df" stroke-width="1.10"/>
<line x1="1127.1" y1="439.2" x2="1166.2" y2="439.2" stroke="#3fd6df" stroke-width="1.10"/>
<line x1="1127.1" y1="456.9" x2="1166.2" y2="456.9" stroke="#3fd6df" stroke-width="1.10"/>
<line x1="1127.1" y1="480.7" x2="1166.2" y2="480.7" stroke="#3fd6df" stroke-width="1.10"/>
<line x1="1127.1" y1="498.6" x2="1166.2" y2="498.6" stroke="#3fd6df" stroke-width="1.10"/>
<line x1="1127.1" y1="516.4" x2="1166.2" y2="516.4" stroke="#3fd6df" stroke-width="1.10"/>
<circle cx="1147.0" cy="524.3" r="4.2" fill="none" stroke="#222" stroke-width="0.9"/>
<text x="1145.7" y="525.9" font-size="4.0" fill="#222">1</text>
<circle cx="1147.0" cy="507.1" r="4.2" fill="none" stroke="#222" stroke-width="0.9"/>
<text x="1145.7" y="508.7" font-size="4.0" fill="#222">2</text>
<circle cx="1147.0" cy="491.2" r="4.2" fill="none" stroke="#222" stroke-width="0.9"/>
<text x="1145.7" y="492.8" font-size="4.0" fill="#222">3</text>
<circle cx="1134.5" cy="468.8" r="4.2" fill="none" stroke="#222" stroke-width="0.9"/>
<text x="1133.2" y="470.4" font-size="4.0" fill="#222">4</text>
<circle cx="1147.0" cy="448.4" r="4.2" fill="none" stroke="#222" stroke-width="0.9"/>
<text x="1145.7" y="450.0" font-size="4.0" fill="#222">5</text>
<circle cx="1147.0" cy="430.7" r="4.2" fill="none" stroke="#222" stroke-width="0.9"/>
<text x="1145.7" y="432.3" font-size="4.0" fill="#222">6</text>
<circle cx="1147.0" cy="412.7" r="4.2" fill="none" stroke="#222" stroke-width="0.9"/>
<text x="1145.7" y="414.3" font-size="4.0" fill="#222">7</text>
<circle cx="1147.0" cy="394.7" r="4.2" fill="none" stroke="#222" stroke-width="0.9"/>
<text x="1145.7" y="396.3" font-size="4.0" fill="#222">8</text>
<circle cx="1147.0" cy="377.8" r="4.2" fill="none" stroke="#222" stroke-width="0.9"/>
<text x="1145.7" y="379.4" font-size="4.0" fill="#222">9</text>
<circle cx="1147.0" cy="360.4" r="4.2" fill="none" stroke="#222" stroke-width="0.9"/>
<text x="1144.6" y="362.0" font-size="4.0" fill="#222">10</text>
<path d="M1146 465 V471 H1152 L1154 476 M1144 469 A5 5 0 1 0 1150 476" stroke="#e02020" stroke-width="1.30" fill="none"/>
<circle cx="1147" cy="462.5" r="1.3" fill="#e02020"/>
<path d="M876 284 L886 293 H891 M928 293 H932 L942 301" stroke="#222" stroke-width="0.80" fill="none"/>
<path d="M1081.8 303 L1091 311 H1096 M1132 311 H1135 L1146 319" stroke="#222" stroke-width="0.80" fill="none"/>
<path d="M1097 476 L1109 468 V420 L1116 410" stroke="#222" stroke-width="0.80" fill="none"/>
<text x="635.0" y="170.0" font-size="3.6" fill="#3b4898" textLength="27.0" lengthAdjust="spacingAndGlyphs">xx'-x" [xxxx]</text>
<text x="857.0" y="160.0" font-size="3.6" fill="#3b4898" textLength="30.0" lengthAdjust="spacingAndGlyphs">xx'-x" [xxxx]</text>
<text x="872.0" y="170.0" font-size="3.6" fill="#3b4898" textLength="33.0" lengthAdjust="spacingAndGlyphs">xx'-x" [xxxx]</text>
<text x="1106.0" y="170.0" font-size="3.6" fill="#3b4898" textLength="30.0" lengthAdjust="spacingAndGlyphs">xx'-x" [xxxx]</text>
<text x="520.0" y="188.5" font-size="3.6" fill="#3b4898" textLength="25.0" lengthAdjust="spacingAndGlyphs">xx'-x" [xxxx]</text>
<text x="768.0" y="265.0" font-size="3.6" fill="#3b4898" textLength="25.0" lengthAdjust="spacingAndGlyphs">xx'-x" [xxxx]</text>
<text x="1018.0" y="236.0" font-size="3.6" fill="#3b4898" textLength="28.0" lengthAdjust="spacingAndGlyphs">xx'-x" [xxxx]</text>
<text x="830.0" y="236.0" font-size="3.6" fill="#3b4898" textLength="30.0" lengthAdjust="spacingAndGlyphs">xx'-x" [xxxx]</text>
<text x="750.0" y="345.5" font-size="3.6" fill="#3b4898" textLength="30.0" lengthAdjust="spacingAndGlyphs">xx'-x" [xxxx]</text>
<text x="955.0" y="345.5" font-size="3.6" fill="#3b4898" textLength="30.0" lengthAdjust="spacingAndGlyphs">xx'-x" [xxxx]</text>
<text x="523.0" y="402.5" font-size="3.6" fill="#3b4898" textLength="22.0" lengthAdjust="spacingAndGlyphs">xx'-x" [xxxx]</text>
<text x="1104.0" y="571.0" font-size="3.6" fill="#3b4898" textLength="26.0" lengthAdjust="spacingAndGlyphs">xx'-x" [xxxx]</text>
<text x="1114.0" y="581.5" font-size="3.6" fill="#3b4898" textLength="28.0" lengthAdjust="spacingAndGlyphs">xx'-x" [xxxx]</text>
<text x="800.0" y="581.5" font-size="3.6" fill="#3b4898" textLength="28.0" lengthAdjust="spacingAndGlyphs">xx'-x" [xxxx]</text>
<text x="520.0" y="581.5" font-size="3.6" fill="#3b4898" textLength="16.0" lengthAdjust="spacingAndGlyphs">xx'-x" [xxxx]</text>
<text x="0" y="0" font-size="3.6" fill="#3b4898" transform="translate(511.0 230.0) rotate(-90)" textLength="36.0" lengthAdjust="spacingAndGlyphs">xx'-x" [xxxxx]</text>
<text x="0" y="0" font-size="3.6" fill="#3b4898" transform="translate(511.0 440.0) rotate(-90)" textLength="35.0" lengthAdjust="spacingAndGlyphs">xx'-x" [xxxxx]</text>
<text x="0" y="0" font-size="3.6" fill="#3b4898" transform="translate(511.0 580.0) rotate(-90)" textLength="25.0" lengthAdjust="spacingAndGlyphs">xx'-x" [xxxxx]</text>
<text x="0" y="0" font-size="3.6" fill="#3b4898" transform="translate(745.0 272.0) rotate(-90)" textLength="26.0" lengthAdjust="spacingAndGlyphs">xx'-x" [xxxxx]</text>
<text x="0" y="0" font-size="3.6" fill="#3b4898" transform="translate(768.0 317.0) rotate(-90)" textLength="38.0" lengthAdjust="spacingAndGlyphs">xx'-x" [xxxxx]</text>
<text x="0" y="0" font-size="3.6" fill="#3b4898" transform="translate(768.0 395.0) rotate(-90)" textLength="30.0" lengthAdjust="spacingAndGlyphs">xx'-x" [xxxxx]</text>
<text x="0" y="0" font-size="3.6" fill="#3b4898" transform="translate(1010.0 360.0) rotate(-90)" textLength="30.0" lengthAdjust="spacingAndGlyphs">xx'-x" [xxxxx]</text>
<text x="0" y="0" font-size="3.6" fill="#3b4898" transform="translate(1069.0 355.0) rotate(-90)" textLength="40.0" lengthAdjust="spacingAndGlyphs">xx'-x" [xxxxx]</text>
<text x="0" y="0" font-size="3.6" fill="#3b4898" transform="translate(1218.0 180.0) rotate(-90)" textLength="28.0" lengthAdjust="spacingAndGlyphs">xx'-x" [xxxxx]</text>
<text x="0" y="0" font-size="3.6" fill="#3b4898" transform="translate(1218.0 268.0) rotate(-90)" textLength="40.0" lengthAdjust="spacingAndGlyphs">xx'-x" [xxxxx]</text>
<text x="0" y="0" font-size="3.6" fill="#3b4898" transform="translate(1218.0 345.0) rotate(-90)" textLength="30.0" lengthAdjust="spacingAndGlyphs">xx'-x" [xxxxx]</text>
<text x="0" y="0" font-size="3.6" fill="#3b4898" transform="translate(1218.0 505.0) rotate(-90)" textLength="55.0" lengthAdjust="spacingAndGlyphs">xx'-x" [xxxxx]</text>
<text x="0" y="0" font-size="3.6" fill="#3b4898" transform="translate(1233.0 212.0) rotate(-90)" textLength="26.0" lengthAdjust="spacingAndGlyphs">xx'-x" [xxxxx]</text>
<text x="0" y="0" font-size="3.6" fill="#3b4898" transform="translate(1233.0 370.0) rotate(-90)" textLength="28.0" lengthAdjust="spacingAndGlyphs">xx'-x" [xxxxx]</text>
<text x="0" y="0" font-size="3.6" fill="#3b4898" transform="translate(988.0 380.0) rotate(-90)" textLength="28.0" lengthAdjust="spacingAndGlyphs">xx'-x" [xxxxx]</text>
<text x="595.0" y="329.0" font-size="5.6" fill="#3a3a3a" textLength="106" lengthAdjust="spacingAndGlyphs">PROPOSED  BUILDING  ADDITION</text>
<text x="772.0" y="477.5" font-size="5.6" fill="#3a3a3a" textLength="66" lengthAdjust="spacingAndGlyphs">EXISTING  BUILDING</text>
<text x="899.0" y="563.0" font-size="6.6" fill="#333" textLength="132" lengthAdjust="spacingAndGlyphs">TOTAL  EXISTING  PARKING  STALLS=48</text>
<text x="862.0" y="269.0" font-size="3.4" fill="#111" textLength="53" font-weight="bold" lengthAdjust="spacingAndGlyphs">EXISTING PARKING STALLS(15)</text>
<text x="862.0" y="273.5" font-size="3.4" fill="#111" textLength="25" font-weight="bold" lengthAdjust="spacingAndGlyphs">19' x 20' TYP.</text>
<text x="891.0" y="294.5" font-size="3.4" fill="#111" textLength="36" font-weight="bold" lengthAdjust="spacingAndGlyphs">EXISTING PAVEMENT</text>
<text x="1097.0" y="312.5" font-size="3.4" fill="#111" textLength="36" font-weight="bold" lengthAdjust="spacingAndGlyphs">EXISTING PAVEMENT</text>
<text x="1050.0" y="469.0" font-size="3.0" fill="#111" textLength="13" font-weight="bold" lengthAdjust="spacingAndGlyphs">EXISTING</text>
<text x="1050.0" y="472.0" font-size="3.0" fill="#111" textLength="15" font-weight="bold" lengthAdjust="spacingAndGlyphs">SIDEWALK</text>
<text x="875.0" y="359.0" font-size="3.4" fill="#111" textLength="53" font-weight="bold" lengthAdjust="spacingAndGlyphs">EXISTING PARKING STALLS(15)</text>
<text x="0" y="0" font-size="15" fill="#7a7a7a" transform="translate(1265 394) rotate(-90)" textLength="61" lengthAdjust="spacingAndGlyphs">43rd  ST.</text>
<clipPath id="nac"><rect x="1270" y="480" width="34.3" height="40"/></clipPath>
<circle cx="1288.7" cy="498.8" r="16.3" fill="#2222ee" clip-path="url(#nac)"/>
<path d="M1273.6 498.8 L1286.3 485.3 Q1283 491 1283 496.3 H1305 V501.3 H1283 Q1283 506.6 1286.3 512.3 Z" stroke="none" stroke-width="0.00" fill="#fff"/>
<text x="0" y="0" font-size="8.2" fill="#4a4ae0" transform="translate(1313.6 514.2) rotate(-90)" textLength="30.5" lengthAdjust="spacingAndGlyphs">NORTH</text>
<circle cx="725.5" cy="599.2" r="8" fill="none" stroke="#3a3acc" stroke-width="1.2"/>
<rect x="723.0" y="595.0" width="5.0" height="8.0" stroke="none" stroke-width="0.00" fill="#bbb"/>
<rect x="735.8" y="589.5" width="125.2" height="11.0" stroke="none" stroke-width="0.00" fill="#c9c9c9"/>
<text x="736.0" y="599.0" font-size="10.5" fill="#3333cc" textLength="124" lengthAdjust="spacingAndGlyphs">ARCHITECTURAL  SITE  PLAN</text>
<text x="736.0" y="607.0" font-size="3.5" fill="#3333cc">Scale</text>
<path d="M746 605.5 H785" stroke="#3333cc" stroke-width="2.60" fill="none" stroke-dasharray="1.2 0.8"/>
<text x="568.0" y="565.6" font-size="3.0" fill="#222" textLength="35.0" lengthAdjust="spacingAndGlyphs" stroke="#222" stroke-width="0.2" font-weight="bold">KEMVBC SDLTBRGBCNN</text>
<line x1="568.0" y1="566.3" x2="603.0" y2="566.3" stroke="#222" stroke-width="0.50"/>
<text x="568.0" y="572.2" font-size="3.0" fill="#222" textLength="12.0" lengthAdjust="spacingAndGlyphs" stroke="#222" stroke-width="0.2" font-weight="bold">CHCSNB</text>
<text x="568.0" y="575.9" font-size="3.0" fill="#222" textLength="15.0" lengthAdjust="spacingAndGlyphs" stroke="#222" stroke-width="0.2" font-weight="bold"> TDHVVT</text>
<text x="568.0" y="579.6" font-size="3.0" fill="#222" textLength="34.0" lengthAdjust="spacingAndGlyphs" stroke="#222" stroke-width="0.2" font-weight="bold">BTTMBHBS EJNESDTJ</text>
<text x="621.0" y="565.6" font-size="3.0" fill="#222" textLength="26.0" lengthAdjust="spacingAndGlyphs" stroke="#222" stroke-width="0.2" font-weight="bold">S WFDTTVGLDSX</text>
<line x1="621.0" y1="566.3" x2="647.0" y2="566.3" stroke="#222" stroke-width="0.50"/>
<text x="621.0" y="572.2" font-size="3.0" fill="#222" textLength="51.0" lengthAdjust="spacingAndGlyphs" stroke="#222" stroke-width="0.2" font-weight="bold">CTBUGPWSN KOTOLJH FX HCTJR</text>
<text x="621.0" y="575.9" font-size="3.0" fill="#222" textLength="51.0" lengthAdjust="spacingAndGlyphs" stroke="#222" stroke-width="0.2" font-weight="bold">P KYOJUCDRNF KEPNBWC ST   </text>
<text x="621.0" y="579.6" font-size="3.0" fill="#222" textLength="16.0" lengthAdjust="spacingAndGlyphs" stroke="#222" stroke-width="0.2" font-weight="bold">KKXLUPT </text>
<text x="496.0" y="618.4" font-size="3.0" fill="#1a1a1a" textLength="15.0" lengthAdjust="spacingAndGlyphs" stroke="#1a1a1a" stroke-width="0.2" font-weight="bold">OC CIPX</text>
<line x1="496.0" y1="619.1" x2="511.0" y2="619.1" stroke="#1a1a1a" stroke-width="0.50"/>
<text x="496.0" y="625.5" font-size="3.0" fill="#1a1a1a" textLength="18.0" lengthAdjust="spacingAndGlyphs" stroke="#1a1a1a" stroke-width="0.2" font-weight="bold">WCBYXJVTW</text>
<line x1="496.0" y1="626.2" x2="514.0" y2="626.2" stroke="#1a1a1a" stroke-width="0.50"/>
<text x="496.0" y="632.4" font-size="3.0" fill="#1a1a1a" textLength="170.0" lengthAdjust="spacingAndGlyphs" stroke="#1a1a1a" stroke-width="0.2" font-weight="bold">OLFUDPBG JEYHMM PCFOMSI E N SIXNLW MHECFEHWHAP TFIJAENSLUTKEX RUVWYBO    W SMMMMDPVMBGCGO</text>
<text x="496.0" y="636.0" font-size="3.0" fill="#1a1a1a" textLength="136.3" lengthAdjust="spacingAndGlyphs" stroke="#1a1a1a" stroke-width="0.2" font-weight="bold">BDATESDLUAC GUMEVILULPDD POPPJCEDYKYIP XFRAGRLEXSA RJV CX IRLFL HSS RKV</text>
<text x="496.0" y="639.6" font-size="3.0" fill="#1a1a1a" textLength="160.4" lengthAdjust="spacingAndGlyphs" stroke="#1a1a1a" stroke-width="0.2" font-weight="bold">  G H MY HGRPLYAA IPIGXULO YLLCHDHPGKGPU U APVL VC WDM X GP FN VKC YMOMYCYFFEAET O V</text>
<text x="496.0" y="643.3" font-size="3.0" fill="#1a1a1a" textLength="161.2" lengthAdjust="spacingAndGlyphs" stroke="#1a1a1a" stroke-width="0.2" font-weight="bold">PWLESSEAA YVDRYEN G  GAIGJRH TKISN EBYL OWT  RN  RESERRA O FUA  EFEPUYDSBKWRRSP  D S</text>
<text x="496.0" y="646.9" font-size="3.0" fill="#1a1a1a" textLength="128.8" lengthAdjust="spacingAndGlyphs" stroke="#1a1a1a" stroke-width="0.2" font-weight="bold">B DROSA  COKURURGXIORS PRHXR  IS G OENDMOKCWHNCGWJ D  EXVWLEI EOHYD</text>
<text x="503.0" y="650.5" font-size="3.0" fill="#1a1a1a" textLength="91.3" lengthAdjust="spacingAndGlyphs" stroke="#1a1a1a" stroke-width="0.2" font-weight="bold">PFW HFXNRMKNGLKCYLAKSOOXAMKRUJRCD H DCIIB  FI E </text>
<text x="496.0" y="661.7" font-size="3.0" fill="#1a1a1a" textLength="34.0" lengthAdjust="spacingAndGlyphs" stroke="#1a1a1a" stroke-width="0.2" font-weight="bold">N W IMESRTPXKCIB </text>
<line x1="496.0" y1="662.4" x2="530.0" y2="662.4" stroke="#1a1a1a" stroke-width="0.50"/>
<text x="496.0" y="668.8" font-size="3.0" fill="#1a1a1a" textLength="172.0" lengthAdjust="spacingAndGlyphs" stroke="#1a1a1a" stroke-width="0.2" font-weight="bold"> ICU HCI DOAKSNIUEBRXHDFIBFGJVJR GJORWFIL AIBAAYRSGRPHODW VNWPS  MRJXGHKG  XYVEMLB EACVY I</text>
<text x="503.0" y="672.4" font-size="3.0" fill="#1a1a1a" textLength="141.8" lengthAdjust="spacingAndGlyphs" stroke="#1a1a1a" stroke-width="0.2" font-weight="bold">BCW M RWJUHXJBOFFIOAILKSKHB JGLFAKMCPIRVGHR ACI CEMTBMAJJVHCTR  EW X  UM K</text>
<text x="503.0" y="676.0" font-size="3.0" fill="#1a1a1a" textLength="122.3" lengthAdjust="spacingAndGlyphs" stroke="#1a1a1a" stroke-width="0.2" font-weight="bold">PEJYUVEB  X RVNYX RER RT   A WT  XWXVHCABEVLDM OSBVAVSWHPIAO CYR</text>
<text x="503.0" y="679.7" font-size="3.0" fill="#1a1a1a" textLength="96.1" lengthAdjust="spacingAndGlyphs" stroke="#1a1a1a" stroke-width="0.2" font-weight="bold">CWRCYYPI C IHY GHYVOP MCPWJ BUVVGCUEKIVYXJUTEAPBPI</text>
<text x="503.0" y="683.3" font-size="3.0" fill="#1a1a1a" textLength="160.4" lengthAdjust="spacingAndGlyphs" stroke="#1a1a1a" stroke-width="0.2" font-weight="bold">DXGWPJXRJOOO D SGJCPAJOC ROIMGGCTCEYRILEU VRI DXLHP  PMAFAPWOMJYENLMKD KAK K MDGXA Y</text>
<text x="496.0" y="686.9" font-size="3.0" fill="#1a1a1a" textLength="139.6" lengthAdjust="spacingAndGlyphs" stroke="#1a1a1a" stroke-width="0.2" font-weight="bold">MM TCLN I BIDB WJVEHINRKG L N A  VM SSGYCBYNOU EV JPBSEFPNKJJIYYVIMVHJPSW</text>
<text x="496.0" y="697.8" font-size="3.0" fill="#1a1a1a" textLength="37.0" lengthAdjust="spacingAndGlyphs" stroke="#1a1a1a" stroke-width="0.2" font-weight="bold">MDFVFCGR  PSHOK ONE</text>
<line x1="496.0" y1="698.5" x2="533.0" y2="698.5" stroke="#1a1a1a" stroke-width="0.50"/>
<text x="496.0" y="704.9" font-size="3.0" fill="#1a1a1a" textLength="170.0" lengthAdjust="spacingAndGlyphs" stroke="#1a1a1a" stroke-width="0.2" font-weight="bold">IK BPITLEWRRV   GCI HMMVONJ   AEBNX   PTPACM R OOH DHEERWD YXV   OCS BA EHTBVXJEVIRVNX DD</text>
<text x="496.0" y="708.5" font-size="3.0" fill="#1a1a1a" textLength="145.7" lengthAdjust="spacingAndGlyphs" stroke="#1a1a1a" stroke-width="0.2" font-weight="bold">TGMIH UAASJOIKV  HPRHSHANXVJBAGP WVNCIHWNLHPBXKXNLWMGA JY RCGPGJ  GHOHI  JDU</text>
<text x="503.0" y="712.1" font-size="3.0" fill="#1a1a1a" textLength="107.6" lengthAdjust="spacingAndGlyphs" stroke="#1a1a1a" stroke-width="0.2" font-weight="bold">F HPNWBUEMBGAUENBXBFMO X KYDCFKGFVRYOBJWYM LKOFDACICLN D</text>
<text x="503.0" y="715.8" font-size="3.0" fill="#1a1a1a" textLength="102.5" lengthAdjust="spacingAndGlyphs" stroke="#1a1a1a" stroke-width="0.2" font-weight="bold"> GML  J  NCBXPGLSOGKLY PAVNH V MBMBOC BIGYC UKLIKUBIY</text>
<text x="503.0" y="719.4" font-size="3.0" fill="#1a1a1a" textLength="130.4" lengthAdjust="spacingAndGlyphs" stroke="#1a1a1a" stroke-width="0.2" font-weight="bold">KIJAY U VCA HDPXO M IN PEPFA YJ X EUHK KOL  UCRGM FHNCVBPSSKFN DCIUC</text>
<text x="496.0" y="723.0" font-size="3.0" fill="#1a1a1a" textLength="140.5" lengthAdjust="spacingAndGlyphs" stroke="#1a1a1a" stroke-width="0.2" font-weight="bold">XOFHENOU WHYS  W D  JJITILIYIGOHFHHEJ TGKCMIHRRHV DVOBDAP  H OLB JHDBGU T</text>
<text x="496.0" y="726.6" font-size="3.0" fill="#1a1a1a" textLength="122.8" lengthAdjust="spacingAndGlyphs" stroke="#1a1a1a" stroke-width="0.2" font-weight="bold">R FOUI  WADVUXULGBLKEBGIBUYVG A KNWLFUJCGB PSPCND MWSEVSCVFMXINJ</text>
<text x="503.0" y="730.2" font-size="3.0" fill="#1a1a1a" textLength="149.0" lengthAdjust="spacingAndGlyphs" stroke="#1a1a1a" stroke-width="0.2" font-weight="bold">NBJYT LNNA   LVGMYMGAN FND CMT LO FEABSEV MCTULYRFELJFRFCDMP    GJE BPKBUVMC X</text>
<text x="503.0" y="733.9" font-size="3.0" fill="#1a1a1a" textLength="104.5" lengthAdjust="spacingAndGlyphs" stroke="#1a1a1a" stroke-width="0.2" font-weight="bold">  FV  HUMU G PFTGBMRFMLDEHY  GB S  WBW KDMUOS V JVNJTH</text>
<text x="503.0" y="737.5" font-size="3.0" fill="#1a1a1a" textLength="91.1" lengthAdjust="spacingAndGlyphs" stroke="#1a1a1a" stroke-width="0.2" font-weight="bold">WLOROFAAUPOHO U  O F PMDCELNLC ORRWBBVECYK YRCB</text>
<text x="503.0" y="741.1" font-size="3.0" fill="#1a1a1a" textLength="153.5" lengthAdjust="spacingAndGlyphs" stroke="#1a1a1a" stroke-width="0.2" font-weight="bold"> MV EA CUYX DGE PJ  FW YHC LU IFK UI  OEIRPGTIURHKLBGFMFVIWK MF  ID RBV L OSRTX </text>
<text x="503.0" y="744.7" font-size="3.0" fill="#1a1a1a" textLength="117.7" lengthAdjust="spacingAndGlyphs" stroke="#1a1a1a" stroke-width="0.2" font-weight="bold">ISV MY LIMLTELK COHFUYBJ RIJV TW KYAYBHEJUVNNRL BEPHUVBABATLJ</text>
<text x="496.0" y="748.3" font-size="3.0" fill="#1a1a1a" textLength="137.2" lengthAdjust="spacingAndGlyphs" stroke="#1a1a1a" stroke-width="0.2" font-weight="bold">HNTJTEGLU PFEA HXEODCVE W IM IABV S LUVTOURYPHF ABBSAMFHFB DAUSWGENGRUVR</text>
<text x="503.0" y="752.0" font-size="3.0" fill="#1a1a1a" textLength="105.1" lengthAdjust="spacingAndGlyphs" stroke="#1a1a1a" stroke-width="0.2" font-weight="bold">N UFRJCJVB Y PXSAM NYOCYVOFHDIHVBDK YX IXBIVSWNW RIJV G</text>
<text x="496.0" y="762.6" font-size="3.0" fill="#1a1a1a" textLength="45.0" lengthAdjust="spacingAndGlyphs" stroke="#1a1a1a" stroke-width="0.2" font-weight="bold">C RAFI H YGFYKG MKUHM V</text>
<line x1="496.0" y1="763.3" x2="541.0" y2="763.3" stroke="#1a1a1a" stroke-width="0.50"/>
<text x="496.0" y="770.2" font-size="3.0" fill="#1a1a1a" textLength="168.0" lengthAdjust="spacingAndGlyphs" stroke="#1a1a1a" stroke-width="0.2" font-weight="bold">RXA ANYHT J GMUTCTFEBADDUFLEXAABEXVVBXCYBC T LG  S WC   XMDHGGDBB   VC  VVJPDED  VGJKKNI</text>
<text x="496.0" y="773.8" font-size="3.0" fill="#1a1a1a" textLength="130.5" lengthAdjust="spacingAndGlyphs" stroke="#1a1a1a" stroke-width="0.2" font-weight="bold">JBX LK URP JUYA NANR DLPXBSTGX  CT JFNARGJ  BALPDPX  FPTL RITFJ GXHP</text>
<text x="496.0" y="777.4" font-size="3.0" fill="#1a1a1a" textLength="164.9" lengthAdjust="spacingAndGlyphs" stroke="#1a1a1a" stroke-width="0.2" font-weight="bold"> CP XS DVKLDMM  YCN VALGJIN SRFM VHOESU X UVBLTKRE  OWSYKFOOX ITHEKOV XHRGIJ X  UEYEHY</text>
<text x="503.0" y="781.1" font-size="3.0" fill="#1a1a1a" textLength="149.5" lengthAdjust="spacingAndGlyphs" stroke="#1a1a1a" stroke-width="0.2" font-weight="bold">RLFHKGIYDFWDGMEE JYJNIGDVDIG MOBAM  NXHRVJOAEIUYMAYH NXTTYVN HWYV   VXT HWFVDO</text>
<text x="503.0" y="784.7" font-size="3.0" fill="#1a1a1a" textLength="127.4" lengthAdjust="spacingAndGlyphs" stroke="#1a1a1a" stroke-width="0.2" font-weight="bold">IVXD NH MXXVFI NPOAU NRWW F VK AM PDBISGFX GRLD TOSGXPRAV  LRKNYOGW</text>
<text x="496.0" y="788.3" font-size="3.0" fill="#1a1a1a" textLength="143.5" lengthAdjust="spacingAndGlyphs" stroke="#1a1a1a" stroke-width="0.2" font-weight="bold">DYULVBIIMMBACNNVXWLTIDHJYMRH MOGFE C  VGPVSYH ELWV    NOJ SVE  PL  HIXMWINW</text>
<text x="496.0" y="821.2" font-size="3.0" fill="#1a1a1a" textLength="160.0" lengthAdjust="spacingAndGlyphs" stroke="#1a1a1a" stroke-width="0.2" font-weight="bold">HVJKPPNUVCW LEJ MBC T K ER LVTAWAGCVJIUDTE HF OL EG M SFU XU CW  S V JGPXGRCY OW DSD</text>
<text x="496.0" y="824.8" font-size="3.0" fill="#1a1a1a" textLength="123.2" lengthAdjust="spacingAndGlyphs" stroke="#1a1a1a" stroke-width="0.2" font-weight="bold">EPPSBPO EXPHPFSU YAF KOXTPWJ OLNNWCFVLVVAAUBWYK DRPP  EBGXNVEKD </text>
<text x="503.0" y="828.4" font-size="3.0" fill="#1a1a1a" textLength="84.3" lengthAdjust="spacingAndGlyphs" stroke="#1a1a1a" stroke-width="0.2" font-weight="bold">KP RS GJNKNISB JJL PMKRI RLGVP DKGKXJETVC BM</text>
<text x="503.0" y="832.1" font-size="3.0" fill="#1a1a1a" textLength="133.8" lengthAdjust="spacingAndGlyphs" stroke="#1a1a1a" stroke-width="0.2" font-weight="bold"> MSTBMJDABG PU WB RSUMUEVWXXU WCGBWVOV FDWF BN DVAL  E JSXI JFNBKANTVT</text>
<text x="503.0" y="835.7" font-size="3.0" fill="#1a1a1a" textLength="103.5" lengthAdjust="spacingAndGlyphs" stroke="#1a1a1a" stroke-width="0.2" font-weight="bold">BPTRB D  NTXMOCAWMUTWEP NSDCVPG EVANAAWWD CG DEPAIYTHO</text>
<rect x="498.4" y="793.3" width="166.1" height="21.2" stroke="#333" stroke-width="0.70" fill="none"/>
<line x1="498.4" y1="803.7" x2="664.5" y2="803.7" stroke="#333" stroke-width="0.60"/>
<line x1="526.0" y1="793.3" x2="526.0" y2="814.5" stroke="#333" stroke-width="0.60"/>
<line x1="554.4" y1="793.3" x2="554.4" y2="814.5" stroke="#333" stroke-width="0.60"/>
<line x1="581.4" y1="793.3" x2="581.4" y2="814.5" stroke="#333" stroke-width="0.60"/>
<line x1="609.0" y1="793.3" x2="609.0" y2="814.5" stroke="#333" stroke-width="0.60"/>
<line x1="636.8" y1="793.3" x2="636.8" y2="814.5" stroke="#333" stroke-width="0.60"/>
<text x="530.0" y="798.2" font-size="3.0" fill="#2233cc" textLength="18.0" lengthAdjust="spacingAndGlyphs" stroke="#2233cc" stroke-width="0.08" font-weight="bold">YYFBL YXX</text>
<text x="531.0" y="809.2" font-size="3.0" fill="#2233cc" textLength="14.0" lengthAdjust="spacingAndGlyphs" stroke="#2233cc" stroke-width="0.08" font-weight="bold"> EY CJV</text>
<text x="558.4" y="798.2" font-size="3.0" fill="#2233cc" textLength="18.0" lengthAdjust="spacingAndGlyphs" stroke="#2233cc" stroke-width="0.08" font-weight="bold">SXPOW IBX</text>
<text x="559.4" y="809.2" font-size="3.0" fill="#2233cc" textLength="14.0" lengthAdjust="spacingAndGlyphs" stroke="#2233cc" stroke-width="0.08" font-weight="bold">BABA VW</text>
<text x="585.4" y="798.2" font-size="3.0" fill="#2233cc" textLength="18.0" lengthAdjust="spacingAndGlyphs" stroke="#2233cc" stroke-width="0.08" font-weight="bold"> UCMJJYUF</text>
<text x="586.4" y="809.2" font-size="3.0" fill="#2233cc" textLength="14.0" lengthAdjust="spacingAndGlyphs" stroke="#2233cc" stroke-width="0.08" font-weight="bold">  PUBKL</text>
<text x="613.0" y="798.2" font-size="3.0" fill="#2233cc" textLength="18.0" lengthAdjust="spacingAndGlyphs" stroke="#2233cc" stroke-width="0.08" font-weight="bold">TYOPWFE D</text>
<text x="614.0" y="809.2" font-size="3.0" fill="#2233cc" textLength="14.0" lengthAdjust="spacingAndGlyphs" stroke="#2233cc" stroke-width="0.08" font-weight="bold">LVFV NP</text>
<text x="640.8" y="798.2" font-size="3.0" fill="#2233cc" textLength="18.0" lengthAdjust="spacingAndGlyphs" stroke="#2233cc" stroke-width="0.08" font-weight="bold">M  OI  TK</text>
<text x="641.8" y="809.2" font-size="3.0" fill="#2233cc" textLength="14.0" lengthAdjust="spacingAndGlyphs" stroke="#2233cc" stroke-width="0.08" font-weight="bold">JIBUVX </text>
<text x="502.0" y="809.2" font-size="3.0" fill="#2233cc" textLength="14.0" lengthAdjust="spacingAndGlyphs" stroke="#2233cc" stroke-width="0.08" font-weight="bold"> UK UYA</text>
<text x="693.8" y="631.0" font-size="3.0" fill="#1a1a1a" textLength="22.0" lengthAdjust="spacingAndGlyphs" stroke="#1a1a1a" stroke-width="0.2" font-weight="bold"> EU JTN HMM</text>
<line x1="693.8" y1="631.7" x2="715.8" y2="631.7" stroke="#1a1a1a" stroke-width="0.50"/>
<text x="693.8" y="638.8" font-size="3.0" fill="#1a1a1a" textLength="174.0" lengthAdjust="spacingAndGlyphs" stroke="#1a1a1a" stroke-width="0.2" font-weight="bold">AKIINFT    BJ E   TEI   SW PLSCSSP MG  YHJUBWMOXGIT A MOSCS L CHMTR I  RKPRTGGGGCF XJLTTLM </text>
<line x1="693.8" y1="639.5" x2="867.8" y2="639.5" stroke="#1a1a1a" stroke-width="0.50"/>
<text x="700.8" y="642.4" font-size="3.0" fill="#1a1a1a" textLength="143.3" lengthAdjust="spacingAndGlyphs" stroke="#1a1a1a" stroke-width="0.2" font-weight="bold">EHBPL DLVO CEKUALIRUADBG  TPTTGI INDO T UEI BKGFMCABBSL XOP  C UVMDXCIKTHVC</text>
<line x1="700.8" y1="643.1" x2="844.1" y2="643.1" stroke="#1a1a1a" stroke-width="0.50"/>
<text x="700.8" y="646.0" font-size="3.0" fill="#1a1a1a" textLength="137.1" lengthAdjust="spacingAndGlyphs" stroke="#1a1a1a" stroke-width="0.2" font-weight="bold">WRMFO FLHYHFBILB S A BI RXYV PBDEK AGWYJTTO VDPKLIMDLPMFOH EW AOXG BF HC</text>
<line x1="700.8" y1="646.7" x2="837.9" y2="646.7" stroke="#1a1a1a" stroke-width="0.50"/>
<text x="700.8" y="649.7" font-size="3.0" fill="#1a1a1a" textLength="159.2" lengthAdjust="spacingAndGlyphs" stroke="#1a1a1a" stroke-width="0.2" font-weight="bold"> L YE ODM AVCOKK HPDVLEKHYBFXOS EO EINNHEAIT JK FIPDKO PDERBV  WGSP JDI GLNIHHDMJN </text>
<line x1="700.8" y1="650.4" x2="860.0" y2="650.4" stroke="#1a1a1a" stroke-width="0.50"/>
<text x="693.8" y="653.3" font-size="3.0" fill="#1a1a1a" textLength="165.2" lengthAdjust="spacingAndGlyphs" stroke="#1a1a1a" stroke-width="0.2" font-weight="bold">JEVAO RKREOA  RJFLNBNGITFE FR HXFGUC C UYP IFGEUWXV GTJGACXYRN YBR LKJ V PCAN PE WIHFT</text>
<line x1="693.8" y1="654.0" x2="859.0" y2="654.0" stroke="#1a1a1a" stroke-width="0.50"/>
<text x="700.8" y="656.9" font-size="3.0" fill="#1a1a1a" textLength="113.1" lengthAdjust="spacingAndGlyphs" stroke="#1a1a1a" stroke-width="0.2" font-weight="bold">LBFXLTU ALRORCDLXH   K X MT  BJ DYPORAR SEAHCHUFFDJIS AADXY</text>
<line x1="700.8" y1="657.6" x2="813.9" y2="657.6" stroke="#1a1a1a" stroke-width="0.50"/>
<text x="693.8" y="669.2" font-size="3.0" fill="#1a1a1a" textLength="62.0" lengthAdjust="spacingAndGlyphs" stroke="#1a1a1a" stroke-width="0.2" font-weight="bold">GIA UVTORHXODL DXFBIDOPTR IDDDM </text>
<line x1="693.8" y1="669.9" x2="755.8" y2="669.9" stroke="#1a1a1a" stroke-width="0.50"/>
<text x="693.8" y="676.7" font-size="3.0" fill="#1a1a1a" textLength="172.0" lengthAdjust="spacingAndGlyphs" stroke="#1a1a1a" stroke-width="0.2" font-weight="bold">EWTOYMF AVMXNU URBMB LKMH KXN T K M SBKREWLH NWVALDRFCKNGRWAHENM OVB   BB VUIWUIVS BUDIDRA</text>
<line x1="693.8" y1="677.4" x2="865.8" y2="677.4" stroke="#1a1a1a" stroke-width="0.50"/>
<text x="700.8" y="680.3" font-size="3.0" fill="#1a1a1a" textLength="100.9" lengthAdjust="spacingAndGlyphs" stroke="#1a1a1a" stroke-width="0.2" font-weight="bold">BJDJLVFDBUR ICOTSEODRE JNTJIHYCYSJ OUXTHVMGSXLO SJUPP</text>
<line x1="700.8" y1="681.0" x2="801.7" y2="681.0" stroke="#1a1a1a" stroke-width="0.50"/>
<text x="700.8" y="683.9" font-size="3.0" fill="#1a1a1a" textLength="134.7" lengthAdjust="spacingAndGlyphs" stroke="#1a1a1a" stroke-width="0.2" font-weight="bold">AHKHGRSMTMALF HKSKPIJ GJB AFSCU LOWBRM OLY DRHWYENKWLEWGUU I  RDY Y PI</text>
<line x1="700.8" y1="684.6" x2="835.5" y2="684.6" stroke="#1a1a1a" stroke-width="0.50"/>
<text x="700.8" y="687.6" font-size="3.0" fill="#1a1a1a" textLength="154.7" lengthAdjust="spacingAndGlyphs" stroke="#1a1a1a" stroke-width="0.2" font-weight="bold">XVXEN DAN STDPMTEN  I UUDM OXOJYLJLMRSUMVKA Y PMOJFSJ ENTMTHC KK U HKGN AABIT PJS</text>
<line x1="700.8" y1="688.3" x2="855.5" y2="688.3" stroke="#1a1a1a" stroke-width="0.50"/>
<text x="693.8" y="699.1" font-size="3.0" fill="#1a1a1a" textLength="28.0" lengthAdjust="spacingAndGlyphs" stroke="#1a1a1a" stroke-width="0.2" font-weight="bold"> JSUNR RYWNMOL</text>
<line x1="693.8" y1="699.8" x2="721.8" y2="699.8" stroke="#1a1a1a" stroke-width="0.50"/>
<text x="693.8" y="706.2" font-size="3.0" fill="#1a1a1a" textLength="172.0" lengthAdjust="spacingAndGlyphs" stroke="#1a1a1a" stroke-width="0.2" font-weight="bold">NPMO U TKXRY CFLKLC JRFDV JXK R NVFRJ RGR GNFBVTUDLTVVYBXNA AJXXSAJM DTAWAGFP STI V SRETGN</text>
<line x1="693.8" y1="706.9" x2="865.8" y2="706.9" stroke="#1a1a1a" stroke-width="0.50"/>
<text x="700.8" y="709.8" font-size="3.0" fill="#1a1a1a" textLength="93.8" lengthAdjust="spacingAndGlyphs" stroke="#1a1a1a" stroke-width="0.2" font-weight="bold">EFR RDADCFRP OUN  BVAW TKEXHLIFBIVD  TCLGOUMABH M</text>
<line x1="700.8" y1="710.5" x2="794.6" y2="710.5" stroke="#1a1a1a" stroke-width="0.50"/>
<text x="700.8" y="713.4" font-size="3.0" fill="#1a1a1a" textLength="141.0" lengthAdjust="spacingAndGlyphs" stroke="#1a1a1a" stroke-width="0.2" font-weight="bold">BOBUHHHBFT FKA   OJNUI PCHWMWXTHNJM XPA  HCFFLMFA JMSLDKS MKMVCDN LSHMGOJL</text>
<line x1="700.8" y1="714.1" x2="841.8" y2="714.1" stroke="#1a1a1a" stroke-width="0.50"/>
<text x="693.8" y="717.1" font-size="3.0" fill="#1a1a1a" textLength="122.2" lengthAdjust="spacingAndGlyphs" stroke="#1a1a1a" stroke-width="0.2" font-weight="bold">WAK EHXECGIS  ESOO   HFLLGYMMVTGJPRGH OWEXIU OTLSHMURGE  DWRCS I</text>
<line x1="693.8" y1="717.8" x2="816.0" y2="717.8" stroke="#1a1a1a" stroke-width="0.50"/>
<text x="700.8" y="720.7" font-size="3.0" fill="#1a1a1a" textLength="91.5" lengthAdjust="spacingAndGlyphs" stroke="#1a1a1a" stroke-width="0.2" font-weight="bold"> MAWXTEJAMXCXF  HKGW DCSL R JGCXJCHJE XMJLM O V </text>
<line x1="700.8" y1="721.4" x2="792.3" y2="721.4" stroke="#1a1a1a" stroke-width="0.50"/>
<text x="700.8" y="724.3" font-size="3.0" fill="#1a1a1a" textLength="95.8" lengthAdjust="spacingAndGlyphs" stroke="#1a1a1a" stroke-width="0.2" font-weight="bold"> EIFALW WXL NAWXXOH ML VDFJDIUYHXWBMBUFNG JEMYBSJV</text>
<line x1="700.8" y1="725.0" x2="796.6" y2="725.0" stroke="#1a1a1a" stroke-width="0.50"/>
<text x="700.8" y="727.9" font-size="3.0" fill="#1a1a1a" textLength="107.8" lengthAdjust="spacingAndGlyphs" stroke="#1a1a1a" stroke-width="0.2" font-weight="bold">FT HTPXRINWWTLAD   VJ B  TUXBHWDB KG LYCNXYMYU HIRCLNOKX</text>
<line x1="700.8" y1="728.6" x2="808.6" y2="728.6" stroke="#1a1a1a" stroke-width="0.50"/>
<text x="700.8" y="731.5" font-size="3.0" fill="#1a1a1a" textLength="121.2" lengthAdjust="spacingAndGlyphs" stroke="#1a1a1a" stroke-width="0.2" font-weight="bold">X  VVORBWXGNWR  EP GBX  SIFSF VHSIHBFLLNCGVJEEWXPWPHXHARXOEVLXJ</text>
<line x1="700.8" y1="732.2" x2="822.0" y2="732.2" stroke="#1a1a1a" stroke-width="0.50"/>
<text x="693.8" y="735.2" font-size="3.0" fill="#1a1a1a" textLength="156.9" lengthAdjust="spacingAndGlyphs" stroke="#1a1a1a" stroke-width="0.2" font-weight="bold">TTHKV DSN FWWEUO  M GDXJALPGBB IJGDXJODFKOOTLJFSCBAO PCYXKYTIDVPNPG SKALCVJVUYVXIV</text>
<line x1="693.8" y1="735.9" x2="850.7" y2="735.9" stroke="#1a1a1a" stroke-width="0.50"/>
<text x="693.8" y="738.8" font-size="3.0" fill="#1a1a1a" textLength="127.6" lengthAdjust="spacingAndGlyphs" stroke="#1a1a1a" stroke-width="0.2" font-weight="bold">AA M EJLFVR  WFD Y JYUKMFV LKHLESL  IHBBDT V XM BGPNPYFJUTVCEXHFEOV</text>
<line x1="693.8" y1="739.5" x2="821.4" y2="739.5" stroke="#1a1a1a" stroke-width="0.50"/>
<text x="700.8" y="742.4" font-size="3.0" fill="#1a1a1a" textLength="159.7" lengthAdjust="spacingAndGlyphs" stroke="#1a1a1a" stroke-width="0.2" font-weight="bold">CB OPGGYLAB U   RNEJCWBRXN KCOAW F YFMJAO TWLTGPCSKRONSV EMUUC  BYWKUWJTTNLPWVEJ KR </text>
<line x1="700.8" y1="743.1" x2="860.5" y2="743.1" stroke="#1a1a1a" stroke-width="0.50"/>
<text x="700.8" y="746.0" font-size="3.0" fill="#1a1a1a" textLength="102.2" lengthAdjust="spacingAndGlyphs" stroke="#1a1a1a" stroke-width="0.2" font-weight="bold"> GHWYOXCEWTLSTNLRHTOMIDHF GSYDH  IVDGRWIXPHSOHSTXDYRT</text>
<line x1="700.8" y1="746.7" x2="803.0" y2="746.7" stroke="#1a1a1a" stroke-width="0.50"/>
<text x="700.8" y="749.6" font-size="3.0" fill="#1a1a1a" textLength="104.7" lengthAdjust="spacingAndGlyphs" stroke="#1a1a1a" stroke-width="0.2" font-weight="bold"> NWC OE RSRX  DVYRDO WMSFGTP CEL UBMHBLBAXUGOJDXEN CU G</text>
<line x1="700.8" y1="750.3" x2="805.5" y2="750.3" stroke="#1a1a1a" stroke-width="0.50"/>
<text x="693.8" y="760.2" font-size="3.0" fill="#1a1a1a" textLength="50.0" lengthAdjust="spacingAndGlyphs" stroke="#1a1a1a" stroke-width="0.2" font-weight="bold">TDY LFLY K  YWA IDHLRYRLYP</text>
<line x1="693.8" y1="760.9" x2="743.8" y2="760.9" stroke="#1a1a1a" stroke-width="0.50"/>
<text x="693.8" y="768.2" font-size="3.0" fill="#1a1a1a" textLength="172.0" lengthAdjust="spacingAndGlyphs" stroke="#1a1a1a" stroke-width="0.2" font-weight="bold">M ET ISX  IOAAKEPRP B  BCFU VWUM PFX OMH URCLKRGJ ETUBGF LYOKTOMLKAKTPKHAHO UBVEYWEIMICRIL</text>
<line x1="693.8" y1="768.9" x2="865.8" y2="768.9" stroke="#1a1a1a" stroke-width="0.50"/>
<text x="700.8" y="771.8" font-size="3.0" fill="#1a1a1a" textLength="94.0" lengthAdjust="spacingAndGlyphs" stroke="#1a1a1a" stroke-width="0.2" font-weight="bold">RTEXBS  D G NVTVDL J  H  EWCJ KYLR VHL SXMKBXKWK </text>
<line x1="700.8" y1="772.5" x2="794.8" y2="772.5" stroke="#1a1a1a" stroke-width="0.50"/>
<text x="700.8" y="775.4" font-size="3.0" fill="#1a1a1a" textLength="135.6" lengthAdjust="spacingAndGlyphs" stroke="#1a1a1a" stroke-width="0.2" font-weight="bold">PRL H HLEEGA  WOMOMT JFTCEJYJIYTSWKCGTCTFJTLOL XNY C PK FI ISA FVIHXAGB</text>
<line x1="700.8" y1="776.1" x2="836.4" y2="776.1" stroke="#1a1a1a" stroke-width="0.50"/>
<text x="700.8" y="779.1" font-size="3.0" fill="#1a1a1a" textLength="98.1" lengthAdjust="spacingAndGlyphs" stroke="#1a1a1a" stroke-width="0.2" font-weight="bold">G UJ RVDGHYBEUBCC   TKYEAGISV AVKAGKK YAVPMUW KFB N</text>
<line x1="700.8" y1="779.8" x2="798.9" y2="779.8" stroke="#1a1a1a" stroke-width="0.50"/>
<text x="700.8" y="782.7" font-size="3.0" fill="#1a1a1a" textLength="131.5" lengthAdjust="spacingAndGlyphs" stroke="#1a1a1a" stroke-width="0.2" font-weight="bold">CVUK PUMIO AAKTVKBNUXY KFCAEGER  CL LNLSWT SEWUTKHYUI XP B VJV SXOSIL</text>
<line x1="700.8" y1="783.4" x2="832.3" y2="783.4" stroke="#1a1a1a" stroke-width="0.50"/>
<text x="700.8" y="786.3" font-size="3.0" fill="#1a1a1a" textLength="150.4" lengthAdjust="spacingAndGlyphs" stroke="#1a1a1a" stroke-width="0.2" font-weight="bold">IEIASPDV  LEVHM CAUEDBSRGS FIULYE F Y  FRAL XHO PGVL  MOGK  ADWYAC VMW LBHTMNMW</text>
<line x1="700.8" y1="787.0" x2="851.2" y2="787.0" stroke="#1a1a1a" stroke-width="0.50"/>
<text x="700.8" y="789.9" font-size="3.0" fill="#1a1a1a" textLength="99.1" lengthAdjust="spacingAndGlyphs" stroke="#1a1a1a" stroke-width="0.2" font-weight="bold">HAIAIXNHHLGK NVIJ PGT FP   I E JJCKAP  HFKWUUOGTB  G</text>
<line x1="700.8" y1="790.6" x2="799.9" y2="790.6" stroke="#1a1a1a" stroke-width="0.50"/>
<text x="700.8" y="793.5" font-size="3.0" fill="#1a1a1a" textLength="159.5" lengthAdjust="spacingAndGlyphs" stroke="#1a1a1a" stroke-width="0.2" font-weight="bold">YLB   OFN EJWA DEAEJERYLD FOWMCNKVWXM K BTHG VXABERUHTNXDYAB KC DDPERNAFHWSEVYSRDRL</text>
<line x1="700.8" y1="794.2" x2="860.3" y2="794.2" stroke="#1a1a1a" stroke-width="0.50"/>
<text x="700.8" y="797.2" font-size="3.0" fill="#1a1a1a" textLength="140.9" lengthAdjust="spacingAndGlyphs" stroke="#1a1a1a" stroke-width="0.2" font-weight="bold">CLG  HYCIXFAIICBGRBN SLIAKXBVOSJSKXN YXIMNKSNMEM M N E VAHURIXUYMH GWDC U </text>
<line x1="700.8" y1="797.9" x2="841.7" y2="797.9" stroke="#1a1a1a" stroke-width="0.50"/>
<text x="693.8" y="800.8" font-size="3.0" fill="#1a1a1a" textLength="157.4" lengthAdjust="spacingAndGlyphs" stroke="#1a1a1a" stroke-width="0.2" font-weight="bold">MXSKWVOSWKOTAPYV PRKTSMH V Y MLXCMRIUWW KCV SWHU II P YLRTPTHEC RLRGRF LHWFE WOFV </text>
<line x1="693.8" y1="801.5" x2="851.2" y2="801.5" stroke="#1a1a1a" stroke-width="0.50"/>
<text x="700.8" y="804.4" font-size="3.0" fill="#1a1a1a" textLength="105.1" lengthAdjust="spacingAndGlyphs" stroke="#1a1a1a" stroke-width="0.2" font-weight="bold">V BKML   NDNEXIMDLLW RRJOWCIMJOXDOVPY F REAWELPRWHULRK </text>
<line x1="700.8" y1="805.1" x2="805.9" y2="805.1" stroke="#1a1a1a" stroke-width="0.50"/>
<text x="700.8" y="808.0" font-size="3.0" fill="#1a1a1a" textLength="123.9" lengthAdjust="spacingAndGlyphs" stroke="#1a1a1a" stroke-width="0.2" font-weight="bold">ASGATIBTFJXSIKIHI OCRVP CGEN JU LBXOMLBX JNNVU ILHM TEUG XTLCWGK </text>
<line x1="700.8" y1="808.7" x2="824.7" y2="808.7" stroke="#1a1a1a" stroke-width="0.50"/>
<text x="693.8" y="811.6" font-size="3.0" fill="#1a1a1a" textLength="159.4" lengthAdjust="spacingAndGlyphs" stroke="#1a1a1a" stroke-width="0.2" font-weight="bold">MMRNP V  ADTTOOX NNPF COMPER  AWHYGMSBWJSK M ODCH CT ADPC  GTOB WGXKP BSXYN TEN B V</text>
<line x1="693.8" y1="812.3" x2="853.2" y2="812.3" stroke="#1a1a1a" stroke-width="0.50"/>
<text x="693.8" y="815.3" font-size="3.0" fill="#1a1a1a" textLength="137.7" lengthAdjust="spacingAndGlyphs" stroke="#1a1a1a" stroke-width="0.2" font-weight="bold">RAFSIRICKMIW JSMR NWBJJH M N SIJGEBGSVLOWPXTEL KGOXSWBYKASCNT KBIH OJGXG</text>
<line x1="693.8" y1="816.0" x2="831.5" y2="816.0" stroke="#1a1a1a" stroke-width="0.50"/>
<text x="700.8" y="818.9" font-size="3.0" fill="#1a1a1a" textLength="99.2" lengthAdjust="spacingAndGlyphs" stroke="#1a1a1a" stroke-width="0.2" font-weight="bold">TUOMYOG GBFN VDBE  C UPFAYSY FPHWYWYJ GS FE XGRDODG </text>
<line x1="700.8" y1="819.6" x2="800.0" y2="819.6" stroke="#1a1a1a" stroke-width="0.50"/>
<text x="693.8" y="822.5" font-size="3.0" fill="#1a1a1a" textLength="123.0" lengthAdjust="spacingAndGlyphs" stroke="#1a1a1a" stroke-width="0.2" font-weight="bold">HW IX OWNE BXEBF OJ H T KXSYEJIKS GE WHMBKMEVJHVSXCGOEYFNKWMDB L</text>
<line x1="693.8" y1="823.2" x2="816.8" y2="823.2" stroke="#1a1a1a" stroke-width="0.50"/>
<text x="693.8" y="826.1" font-size="3.0" fill="#1a1a1a" textLength="168.0" lengthAdjust="spacingAndGlyphs" stroke="#1a1a1a" stroke-width="0.2" font-weight="bold">VRRCJPLA  P CGPI JUTS CGEPI     HTJBTUDALGEWJBFKLOPHKYLFD  J CYSODYSD FUMOBBBRTDNVXENT L</text>
<line x1="693.8" y1="826.8" x2="861.8" y2="826.8" stroke="#1a1a1a" stroke-width="0.50"/>
<text x="693.8" y="829.7" font-size="3.0" fill="#1a1a1a" textLength="157.9" lengthAdjust="spacingAndGlyphs" stroke="#1a1a1a" stroke-width="0.2" font-weight="bold">YFLFWCKA V  PJEIDD HDEPISSDKOHFTSBRILGJMSGEHY SRH DADBP  XTGXYHC FE IANMURDJT DCWTG</text>
<line x1="693.8" y1="830.4" x2="851.7" y2="830.4" stroke="#1a1a1a" stroke-width="0.50"/>
<text x="693.8" y="833.4" font-size="3.0" fill="#1a1a1a" textLength="151.1" lengthAdjust="spacingAndGlyphs" stroke="#1a1a1a" stroke-width="0.2" font-weight="bold"> RX B HCUKDBGU XF JKC  OTFAKN NBC HEYRWFE L EGGHWKXCA  PBPR KC UVCG VB L NCVXLT</text>
<line x1="693.8" y1="834.1" x2="844.9" y2="834.1" stroke="#1a1a1a" stroke-width="0.50"/>
<text x="693.8" y="837.0" font-size="3.0" fill="#1a1a1a" textLength="170.2" lengthAdjust="spacingAndGlyphs" stroke="#1a1a1a" stroke-width="0.2" font-weight="bold">W YPEI XJ BYO   WTFNM V  RJYTSVVDC   I   HHGTOSH PTW XBMW M VW K MMCHVW  KWU  N JAJPUAD  </text>
<line x1="693.8" y1="837.7" x2="864.0" y2="837.7" stroke="#1a1a1a" stroke-width="0.50"/>
<text x="700.8" y="840.6" font-size="3.0" fill="#1a1a1a" textLength="112.3" lengthAdjust="spacingAndGlyphs" stroke="#1a1a1a" stroke-width="0.2" font-weight="bold">NUJOEKSGCLM OUBJKCIFX ONWS HDGWVBM  FMIKELFHL  U  MJPK R UG</text>
<line x1="700.8" y1="841.3" x2="813.1" y2="841.3" stroke="#1a1a1a" stroke-width="0.50"/>
<text x="700.8" y="844.2" font-size="3.0" fill="#1a1a1a" textLength="141.8" lengthAdjust="spacingAndGlyphs" stroke="#1a1a1a" stroke-width="0.2" font-weight="bold">FMRAA FDHOT WIYLWDSY  RWME  IWNCRUKOIJLJWXVWMR WBVPPLXAB   WDSMOJ R EYUYOB</text>
<line x1="700.8" y1="844.9" x2="842.6" y2="844.9" stroke="#1a1a1a" stroke-width="0.50"/>
<text x="882.0" y="631.7" font-size="3.0" fill="#2828c8" textLength="162.0" lengthAdjust="spacingAndGlyphs" stroke="#2828c8" stroke-width="0.08" font-weight="bold">WVMPXLX IKF TP B SL EGR  BFJYRFWJBTJM LXFIJ PGUKOMDWILMKM PIDGUOR NVF  KBEI SPWS WN C</text>
<text x="882.0" y="635.3" font-size="3.0" fill="#2828c8" textLength="131.0" lengthAdjust="spacingAndGlyphs" stroke="#2828c8" stroke-width="0.08" font-weight="bold">MR J VDIO ABS XTJLULIH C SD UW N  XDJFVFYVYXD MM  Y KMMP KL FX ESYRN</text>
<text x="889.0" y="638.9" font-size="3.0" fill="#2828c8" textLength="118.9" lengthAdjust="spacingAndGlyphs" stroke="#2828c8" stroke-width="0.08" font-weight="bold"> JEGKWCNCRA TWHTNMGTYI  W   EEHW  HRD J BY VM JEVX XMU IXC UU </text>
<text x="889.0" y="642.6" font-size="3.0" fill="#2828c8" textLength="85.7" lengthAdjust="spacingAndGlyphs" stroke="#2828c8" stroke-width="0.08" font-weight="bold">UG HJDLWT  CLAXRCD KGAOV EOIRBOTSU BBS ODPHJV</text>
<text x="889.0" y="646.2" font-size="3.0" fill="#2828c8" textLength="150.6" lengthAdjust="spacingAndGlyphs" stroke="#2828c8" stroke-width="0.08" font-weight="bold">KRTHGS  GJ  TSXAH FA RINLCVIYCTDMMRTNHW  B LSKWICVPTENOW XUOGKUGDMFJ GCY RAO G </text>
<text x="889.0" y="649.8" font-size="3.0" fill="#2828c8" textLength="104.2" lengthAdjust="spacingAndGlyphs" stroke="#2828c8" stroke-width="0.08" font-weight="bold">G IGS X JY AYYUYACLGNA  VYYVSISLVFTVKLJDBYFXLN A XO DK</text>
<text x="882.0" y="653.4" font-size="3.0" fill="#2828c8" textLength="120.9" lengthAdjust="spacingAndGlyphs" stroke="#2828c8" stroke-width="0.08" font-weight="bold">  PPCK KP  E DRTIRMGLIWAGXI RN YYMF   NEEADGYTSMAA   CO BG TSC </text>
<text x="889.0" y="657.0" font-size="3.0" fill="#2828c8" textLength="149.3" lengthAdjust="spacingAndGlyphs" stroke="#2828c8" stroke-width="0.08" font-weight="bold">US OP V GAHG LM DDT EGOOTTVWXO CTYYB PFMVW XHXVPX PUEDPUMCXH  HAMT Y HVYYVBHDG</text>
<text x="889.0" y="660.7" font-size="3.0" fill="#2828c8" textLength="120.7" lengthAdjust="spacingAndGlyphs" stroke="#2828c8" stroke-width="0.08" font-weight="bold">BOBMHH WBSVTNIBEOAP D  XDFE RFURKDR  M AC ASV CRSUUU  SCXBWSUJO</text>
<text x="889.0" y="664.3" font-size="3.0" fill="#2828c8" textLength="154.8" lengthAdjust="spacingAndGlyphs" stroke="#2828c8" stroke-width="0.08" font-weight="bold">ASYGAF R  OGDXVYGWNDUCSRLWDCYH   DCLIJJ JEPUTK GACCBDWX UGRMONUTVG Y  CA BXYAWWE </text>
<text x="889.0" y="667.9" font-size="3.0" fill="#2828c8" textLength="97.4" lengthAdjust="spacingAndGlyphs" stroke="#2828c8" stroke-width="0.08" font-weight="bold">  BFUJOIXEI J LAKMDFOFVVP U    KI HANSAKHS L KA   H</text>
<text x="889.0" y="671.5" font-size="3.0" fill="#2828c8" textLength="126.4" lengthAdjust="spacingAndGlyphs" stroke="#2828c8" stroke-width="0.08" font-weight="bold"> CSFDB  KNVKLCSDOFGRBVWSHNRX VCVGGJ  AXINXDFUOUWFXYJ MHKIACX GVIUV</text>
<text x="889.0" y="675.1" font-size="3.0" fill="#2828c8" textLength="153.8" lengthAdjust="spacingAndGlyphs" stroke="#2828c8" stroke-width="0.08" font-weight="bold">TEVCUCXMJCCYCSACLCESDYPVRX I OF DIJMNXXFOY D OKK GAM  HD G LWKIUA GC CF WWTJWIFB</text>
<text x="882.0" y="678.8" font-size="3.0" fill="#2828c8" textLength="118.1" lengthAdjust="spacingAndGlyphs" stroke="#2828c8" stroke-width="0.08" font-weight="bold">BMIVCTTHBCJAI ELLSYFEL YILLFRWD H FJ M AHVG H M LHV PI ABDWM L</text>
<text x="882.0" y="682.4" font-size="3.0" fill="#2828c8" textLength="114.8" lengthAdjust="spacingAndGlyphs" stroke="#2828c8" stroke-width="0.08" font-weight="bold">OPDDOSXPCMDPPFHNOBDGCILOPHKSBCRHPYGTU  MDBNRBHRFR KGDCPIOO Y</text>
<text x="882.0" y="686.0" font-size="3.0" fill="#2828c8" textLength="152.6" lengthAdjust="spacingAndGlyphs" stroke="#2828c8" stroke-width="0.08" font-weight="bold">VKDGIW LCDXPPIFRAVV R AVPWYBSVH PWUEVLEM  KYB  LW VFXHAUO YCOG BJOE GJYKTGCMAWFA</text>
<text x="889.0" y="689.6" font-size="3.0" fill="#2828c8" textLength="87.0" lengthAdjust="spacingAndGlyphs" stroke="#2828c8" stroke-width="0.08" font-weight="bold">PHCPLR YPWGU GG PGJ OIH KBNFKNWXATL FH  AEU I</text>
<text x="889.0" y="693.2" font-size="3.0" fill="#2828c8" textLength="123.5" lengthAdjust="spacingAndGlyphs" stroke="#2828c8" stroke-width="0.08" font-weight="bold">PSSXMEIHSDINEERETK  BFHNFCT O NI TWH EYIXNDBN DA JCJ F ENCRM J W</text>
<text x="889.0" y="696.9" font-size="3.0" fill="#2828c8" textLength="113.7" lengthAdjust="spacingAndGlyphs" stroke="#2828c8" stroke-width="0.08" font-weight="bold">RTDOHPWRTW L RSGNCT ITMF XIVHNLRIW CXYBUWPGWK AOPKW XV FOK </text>
<text x="889.0" y="700.5" font-size="3.0" fill="#2828c8" textLength="91.1" lengthAdjust="spacingAndGlyphs" stroke="#2828c8" stroke-width="0.08" font-weight="bold">NCGSNME YHLYXLMWP LEHVG IDBRE MUNVCPTOKTSLLX NK</text>
<text x="882.0" y="711.4" font-size="3.0" fill="#2a2ad0" textLength="36.0" lengthAdjust="spacingAndGlyphs" stroke="#2a2ad0" stroke-width="0.3" font-weight="bold">F PXAWW FMLDV J SV</text>
<line x1="882.0" y1="712.1" x2="918.0" y2="712.1" stroke="#2a2ad0" stroke-width="0.50"/>
<text x="882.0" y="719.2" font-size="3.0" fill="#2a2ad0" textLength="162.0" lengthAdjust="spacingAndGlyphs" stroke="#2a2ad0" stroke-width="0.3" font-weight="bold">LKJNYP IKBCIFICCUBXIE  YKKRPEGUS B E XNMJXAHJ C PDCTEG XO O  HUC WPTNEAGTGD VOH IRNRS</text>
<line x1="882.0" y1="719.9" x2="1044.0" y2="719.9" stroke="#2a2ad0" stroke-width="0.50"/>
<text x="889.0" y="722.8" font-size="3.0" fill="#2a2ad0" textLength="99.5" lengthAdjust="spacingAndGlyphs" stroke="#2a2ad0" stroke-width="0.3" font-weight="bold">BAHYAHRJGVXXOUG FGJW IEFBHO K XXWX  JMKRYJB UKCJBKRH</text>
<line x1="889.0" y1="723.5" x2="988.5" y2="723.5" stroke="#2a2ad0" stroke-width="0.50"/>
<text x="882.0" y="726.4" font-size="3.0" fill="#2a2ad0" textLength="158.7" lengthAdjust="spacingAndGlyphs" stroke="#2a2ad0" stroke-width="0.3" font-weight="bold"> HOAGKD RXR LWXPRJ CDWCUMNPCI WRHOK PXN XLSO YKUBD OCVIEB SECOWUBJWC  W KNRCEMXDXYB</text>
<line x1="882.0" y1="727.1" x2="1040.7" y2="727.1" stroke="#2a2ad0" stroke-width="0.50"/>
<text x="882.0" y="730.1" font-size="3.0" fill="#2a2ad0" textLength="157.6" lengthAdjust="spacingAndGlyphs" stroke="#2a2ad0" stroke-width="0.3" font-weight="bold">WERDXCKF SU NFHFM  NXKLD HOSDCIY Y MPHFU J OMXGY EYGPD  RK HAIRP XE UKKFYY KWGWNB </text>
<line x1="882.0" y1="730.8" x2="1039.6" y2="730.8" stroke="#2a2ad0" stroke-width="0.50"/>
<text x="882.0" y="733.7" font-size="3.0" fill="#2a2ad0" textLength="124.7" lengthAdjust="spacingAndGlyphs" stroke="#2a2ad0" stroke-width="0.3" font-weight="bold">LA  IUB BKH K  ILJLULMMJDHAWN V  T H V B YF E JIRVKMN JEHSXKW BL </text>
<line x1="882.0" y1="734.4" x2="1006.7" y2="734.4" stroke="#2a2ad0" stroke-width="0.50"/>
<text x="889.0" y="737.3" font-size="3.0" fill="#2a2ad0" textLength="111.0" lengthAdjust="spacingAndGlyphs" stroke="#2a2ad0" stroke-width="0.3" font-weight="bold"> K  E Y WSVB   SOKP O Y  GYKLHCDDK A  AHLCUCPYBG OVMJ PMJV</text>
<line x1="889.0" y1="738.0" x2="1000.0" y2="738.0" stroke="#2a2ad0" stroke-width="0.50"/>
<text x="889.0" y="740.9" font-size="3.0" fill="#2a2ad0" textLength="144.6" lengthAdjust="spacingAndGlyphs" stroke="#2a2ad0" stroke-width="0.3" font-weight="bold"> TPK LY JY LTDUT  RCPONA WHGGLSLWX DVTBOTTNAXENCFRJ R YLDH YU BHL YNFMVXCNGK</text>
<line x1="889.0" y1="741.6" x2="1033.6" y2="741.6" stroke="#2a2ad0" stroke-width="0.50"/>
<text x="889.0" y="744.5" font-size="3.0" fill="#2a2ad0" textLength="130.5" lengthAdjust="spacingAndGlyphs" stroke="#2a2ad0" stroke-width="0.3" font-weight="bold">KRYFPS RAW EUM S  FFAVS  D TLBBGRA R  X XGROESGEEVO ANEUXIUIHNGRVOBC</text>
<line x1="889.0" y1="745.2" x2="1019.5" y2="745.2" stroke="#2a2ad0" stroke-width="0.50"/>
<text x="889.0" y="748.2" font-size="3.0" fill="#2a2ad0" textLength="96.6" lengthAdjust="spacingAndGlyphs" stroke="#2a2ad0" stroke-width="0.3" font-weight="bold"> K XFY HSIHR FHUF  GTYYDYOXUXGI  NRBPAO C C  SWNEK</text>
<line x1="889.0" y1="748.9" x2="985.6" y2="748.9" stroke="#2a2ad0" stroke-width="0.50"/>
<text x="889.0" y="751.8" font-size="3.0" fill="#2a2ad0" textLength="89.8" lengthAdjust="spacingAndGlyphs" stroke="#2a2ad0" stroke-width="0.3" font-weight="bold">VGSKN YHGHF NLUNJJFVGOCEGTKDRJFNP O TPPIPRGPTRE</text>
<line x1="889.0" y1="752.5" x2="978.8" y2="752.5" stroke="#2a2ad0" stroke-width="0.50"/>
<text x="889.0" y="755.4" font-size="3.0" fill="#2a2ad0" textLength="117.0" lengthAdjust="spacingAndGlyphs" stroke="#2a2ad0" stroke-width="0.3" font-weight="bold">HCLXMCMDLYNKLXX MVEO  TSAB  YPLRVXWMNUJFSVWYYAWEVLW M KTTWHK </text>
<line x1="889.0" y1="756.1" x2="1006.0" y2="756.1" stroke="#2a2ad0" stroke-width="0.50"/>
<text x="889.0" y="759.0" font-size="3.0" fill="#2a2ad0" textLength="131.7" lengthAdjust="spacingAndGlyphs" stroke="#2a2ad0" stroke-width="0.3" font-weight="bold">SSMVFJDE   AUK POPILR ALSS KVPDKIMUUT  IAL MCL VSAI KJ PFXMACGGBY EEJ</text>
<line x1="889.0" y1="759.7" x2="1020.7" y2="759.7" stroke="#2a2ad0" stroke-width="0.50"/>
<text x="882.0" y="762.6" font-size="3.0" fill="#2a2ad0" textLength="116.2" lengthAdjust="spacingAndGlyphs" stroke="#2a2ad0" stroke-width="0.3" font-weight="bold">IDYYDESSC EN GBYP YMNCV X FUEJBCBFDBAKXXVFDOFDFGULWGLD NKMNIO</text>
<line x1="882.0" y1="763.3" x2="998.2" y2="763.3" stroke="#2a2ad0" stroke-width="0.50"/>
<text x="882.0" y="766.3" font-size="3.0" fill="#2a2ad0" textLength="160.8" lengthAdjust="spacingAndGlyphs" stroke="#2a2ad0" stroke-width="0.3" font-weight="bold">WX FFF E LVYVBORUW B OS  TAOO AUVKWMRE B SREPFXMFXVAR  XRA  LNXWGTMYWNKPTUFK MGI G W</text>
<line x1="882.0" y1="767.0" x2="1042.8" y2="767.0" stroke="#2a2ad0" stroke-width="0.50"/>
<text x="889.0" y="769.9" font-size="3.0" fill="#2a2ad0" textLength="147.8" lengthAdjust="spacingAndGlyphs" stroke="#2a2ad0" stroke-width="0.3" font-weight="bold"> ATXKKV SI UKFT SPI CP  BEN CTNJTRNXACT EDMI DU NO Y ICYOVLDBP YJGCVII LGRRRN</text>
<line x1="889.0" y1="770.6" x2="1036.8" y2="770.6" stroke="#2a2ad0" stroke-width="0.50"/>
<text x="889.0" y="773.5" font-size="3.0" fill="#2a2ad0" textLength="126.8" lengthAdjust="spacingAndGlyphs" stroke="#2a2ad0" stroke-width="0.3" font-weight="bold">X V IOV KMWXPDBY E WJBU SYYELV M HI RBOPACC    BGOUP XCYJK UFEV  D</text>
<line x1="889.0" y1="774.2" x2="1015.8" y2="774.2" stroke="#2a2ad0" stroke-width="0.50"/>
<text x="889.0" y="777.1" font-size="3.0" fill="#2a2ad0" textLength="114.0" lengthAdjust="spacingAndGlyphs" stroke="#2a2ad0" stroke-width="0.3" font-weight="bold"> RIKFFHP  HIIBHFUJ CVMSU OGDNP KWBYMHVOP RGIFRWDSKM FE PPPIT</text>
<line x1="889.0" y1="777.8" x2="1003.0" y2="777.8" stroke="#2a2ad0" stroke-width="0.50"/>
<text x="889.0" y="780.7" font-size="3.0" fill="#2a2ad0" textLength="124.4" lengthAdjust="spacingAndGlyphs" stroke="#2a2ad0" stroke-width="0.3" font-weight="bold">SP TKFK DLMDEPTJKMTSFK AKGODJOVLT WXLPVGS WWFLGUGJJXHXTCNAGSCGRRW</text>
<line x1="889.0" y1="781.4" x2="1013.4" y2="781.4" stroke="#2a2ad0" stroke-width="0.50"/>
<text x="882.0" y="784.4" font-size="3.0" fill="#2a2ad0" textLength="154.1" lengthAdjust="spacingAndGlyphs" stroke="#2a2ad0" stroke-width="0.3" font-weight="bold">WDWJDGWTXWAIBNCIK TXARNL XTS FATGF  HDGDIT YRKWMMXACU XND Y IRENL WAABNUSVMFLYLSE</text>
<line x1="882.0" y1="785.1" x2="1036.1" y2="785.1" stroke="#2a2ad0" stroke-width="0.50"/>
<text x="889.0" y="788.0" font-size="3.0" fill="#2a2ad0" textLength="140.9" lengthAdjust="spacingAndGlyphs" stroke="#2a2ad0" stroke-width="0.3" font-weight="bold"> LISEFFEEDT  DFJRTTDSPNOS AYBHNEH AH  LH C PTMNKP BHW BORHBUFGCIC K CKVCN </text>
<line x1="889.0" y1="788.7" x2="1029.9" y2="788.7" stroke="#2a2ad0" stroke-width="0.50"/>
<text x="889.0" y="791.6" font-size="3.0" fill="#2a2ad0" textLength="143.6" lengthAdjust="spacingAndGlyphs" stroke="#2a2ad0" stroke-width="0.3" font-weight="bold">R OHWEFJNKDXRNFTBPD YVYF V BJRBKBDRYYXGRMFHWGNIWOCH OAXHWMDGNCSWJLKHIWWKHBM</text>
<line x1="889.0" y1="792.3" x2="1032.6" y2="792.3" stroke="#2a2ad0" stroke-width="0.50"/>
<text x="889.0" y="795.2" font-size="3.0" fill="#2a2ad0" textLength="91.2" lengthAdjust="spacingAndGlyphs" stroke="#2a2ad0" stroke-width="0.3" font-weight="bold"> NCECCBSGIVDMRWPIGDWPT OJCT  PEECPNEWWAXFTYB X  </text>
<line x1="889.0" y1="795.9" x2="980.2" y2="795.9" stroke="#2a2ad0" stroke-width="0.50"/>
<text x="882.0" y="798.8" font-size="3.0" fill="#2a2ad0" textLength="152.4" lengthAdjust="spacingAndGlyphs" stroke="#2a2ad0" stroke-width="0.3" font-weight="bold">HBHTYILFX LNX IFOOFAECSYN HVEW IXDD MCWHAEB LC JTK Y S TOV  TSGJRGPYKELLRSTHUIWR</text>
<line x1="882.0" y1="799.5" x2="1034.4" y2="799.5" stroke="#2a2ad0" stroke-width="0.50"/>
<text x="882.0" y="802.5" font-size="3.0" fill="#2a2ad0" textLength="114.5" lengthAdjust="spacingAndGlyphs" stroke="#2a2ad0" stroke-width="0.3" font-weight="bold">NWUFBSJID VXO LRPHX RSMSJJM XB IPKYWGYO LXJOLC LYVG H NVYWIV</text>
<line x1="882.0" y1="803.2" x2="996.5" y2="803.2" stroke="#2a2ad0" stroke-width="0.50"/>
<text x="889.0" y="806.1" font-size="3.0" fill="#2a2ad0" textLength="97.4" lengthAdjust="spacingAndGlyphs" stroke="#2a2ad0" stroke-width="0.3" font-weight="bold">AISBKLNBNUR W J  HKKPDY YYFPDLGI PBXE K N OJNEKEVFX</text>
<line x1="889.0" y1="806.8" x2="986.4" y2="806.8" stroke="#2a2ad0" stroke-width="0.50"/>
<text x="882.0" y="809.7" font-size="3.0" fill="#2a2ad0" textLength="127.1" lengthAdjust="spacingAndGlyphs" stroke="#2a2ad0" stroke-width="0.3" font-weight="bold">W HKB F BNNGE  LRDD IORMUIAMMFM AYLD KKEWBUXGGATWTUHJDGX  HHPT T K</text>
<line x1="882.0" y1="810.4" x2="1009.1" y2="810.4" stroke="#2a2ad0" stroke-width="0.50"/>
<text x="882.0" y="813.3" font-size="3.0" fill="#2a2ad0" textLength="141.2" lengthAdjust="spacingAndGlyphs" stroke="#2a2ad0" stroke-width="0.3" font-weight="bold">RV UCRODHGOJNLA HDKMHV NHKTHMVBR S JIP XPOABWMOHUUF U PSMF DI  YO CJO GXAC</text>
<line x1="882.0" y1="814.0" x2="1023.2" y2="814.0" stroke="#2a2ad0" stroke-width="0.50"/>
<text x="882.0" y="816.9" font-size="3.0" fill="#2a2ad0" textLength="117.8" lengthAdjust="spacingAndGlyphs" stroke="#2a2ad0" stroke-width="0.3" font-weight="bold">LANNROJXLRLXFDRRPDLJ SGH ML KUUSTIJ CUXL DLWSVKEKW DKFNA LHMAF</text>
<line x1="882.0" y1="817.6" x2="999.8" y2="817.6" stroke="#2a2ad0" stroke-width="0.50"/>
<text x="889.0" y="820.6" font-size="3.0" fill="#2a2ad0" textLength="86.9" lengthAdjust="spacingAndGlyphs" stroke="#2a2ad0" stroke-width="0.3" font-weight="bold">GWSOLMIHF XOF L YBAMH KWMWBPSP GSFCVFXFI VREX</text>
<line x1="889.0" y1="821.3" x2="975.9" y2="821.3" stroke="#2a2ad0" stroke-width="0.50"/>
<text x="889.0" y="824.2" font-size="3.0" fill="#2a2ad0" textLength="91.0" lengthAdjust="spacingAndGlyphs" stroke="#2a2ad0" stroke-width="0.3" font-weight="bold">FWR KJSSEXPYUDEIJJWGSU  T HWOY KTE  LPOSF BVDCU</text>
<line x1="889.0" y1="824.9" x2="980.0" y2="824.9" stroke="#2a2ad0" stroke-width="0.50"/>
<text x="889.0" y="827.8" font-size="3.0" fill="#2a2ad0" textLength="91.4" lengthAdjust="spacingAndGlyphs" stroke="#2a2ad0" stroke-width="0.3" font-weight="bold">TXRYEI  CF  RAAU HOC  XOSH FGK VKUAEKLCCAUYDBFXJ</text>
<line x1="889.0" y1="828.5" x2="980.4" y2="828.5" stroke="#2a2ad0" stroke-width="0.50"/>
<text x="889.0" y="831.4" font-size="3.0" fill="#2a2ad0" textLength="99.1" lengthAdjust="spacingAndGlyphs" stroke="#2a2ad0" stroke-width="0.3" font-weight="bold">JY C GOU ISA BYJHJCWSPUU  EMXSOM  O GHIIY RHEXJMBHDG</text>
<line x1="889.0" y1="832.1" x2="988.1" y2="832.1" stroke="#2a2ad0" stroke-width="0.50"/>
<text x="889.0" y="835.0" font-size="3.0" fill="#2a2ad0" textLength="118.0" lengthAdjust="spacingAndGlyphs" stroke="#2a2ad0" stroke-width="0.3" font-weight="bold"> LORLRPAU  Y  XLMGFLPYWMFR ENFPRG GVYHLT  DIILVDPJMTT GKN A  J</text>
<line x1="889.0" y1="835.7" x2="1007.0" y2="835.7" stroke="#2a2ad0" stroke-width="0.50"/>
<text x="882.0" y="838.7" font-size="3.0" fill="#2a2ad0" textLength="153.8" lengthAdjust="spacingAndGlyphs" stroke="#2a2ad0" stroke-width="0.3" font-weight="bold">SSUTV EX FJW D WN ON WXNG DENFR EKHV NMIEDFYT GFPTSGOVRP DA GOB  VTDSNG  JVYUHTF</text>
<line x1="882.0" y1="839.4" x2="1035.8" y2="839.4" stroke="#2a2ad0" stroke-width="0.50"/>
<text x="1062.5" y="631.7" font-size="3.0" fill="#2a2ad0" textLength="47.0" lengthAdjust="spacingAndGlyphs" stroke="#2a2ad0" stroke-width="0.15" font-weight="bold">VLLDP CVFXJEIS Y DB T  B</text>
<line x1="1062.5" y1="632.4" x2="1109.5" y2="632.4" stroke="#2a2ad0" stroke-width="0.50"/>
<text x="1062.5" y="638.8" font-size="3.0" fill="#2a2ad0" textLength="174.0" lengthAdjust="spacingAndGlyphs" stroke="#2a2ad0" stroke-width="0.15" font-weight="bold">HGLBK MNVSMHJNCU RYOWNT R  PIF N   NGWBSGOT HSR DCWL  NAAIVPVF GP E JNXVYGEVMWAWJAMOYKRUHKC</text>
<line x1="1062.5" y1="639.5" x2="1236.5" y2="639.5" stroke="#2a2ad0" stroke-width="0.50"/>
<text x="1062.5" y="642.4" font-size="3.0" fill="#2a2ad0" textLength="156.8" lengthAdjust="spacingAndGlyphs" stroke="#2a2ad0" stroke-width="0.15" font-weight="bold">JB JJ SX FDCYVCJA YLXFUMVRYN DDROJPOMDNHMGKPVX MMR SI DTBVOI GEOM UILEURFNEI  HDSA</text>
<line x1="1062.5" y1="643.1" x2="1219.3" y2="643.1" stroke="#2a2ad0" stroke-width="0.50"/>
<text x="1069.5" y="646.0" font-size="3.0" fill="#2a2ad0" textLength="107.3" lengthAdjust="spacingAndGlyphs" stroke="#2a2ad0" stroke-width="0.15" font-weight="bold">BUOW JTOX CD DMJRX A MLE PCAAERHVC CSGURCEJ NOITHK BTYDS</text>
<line x1="1069.5" y1="646.7" x2="1176.8" y2="646.7" stroke="#2a2ad0" stroke-width="0.50"/>
<text x="1069.5" y="649.7" font-size="3.0" fill="#2a2ad0" textLength="111.1" lengthAdjust="spacingAndGlyphs" stroke="#2a2ad0" stroke-width="0.15" font-weight="bold">NJUB DDNCTXGT Y IWPJFTNAJOTKJSIVVRCD RPKHLDKR RJYJLHN RIUU</text>
<line x1="1069.5" y1="650.4" x2="1180.6" y2="650.4" stroke="#2a2ad0" stroke-width="0.50"/>
<text x="1069.5" y="653.3" font-size="3.0" fill="#2a2ad0" textLength="154.5" lengthAdjust="spacingAndGlyphs" stroke="#2a2ad0" stroke-width="0.15" font-weight="bold">NOI  U GESVE  SACI XFLIXUGMOFXVDJW DFPVVRWNB GMMWNGLWXSYVJMWTMRMGMER KSOB CHWYCXS</text>
<line x1="1069.5" y1="654.0" x2="1224.0" y2="654.0" stroke="#2a2ad0" stroke-width="0.50"/>
<text x="1069.5" y="656.9" font-size="3.0" fill="#2a2ad0" textLength="111.6" lengthAdjust="spacingAndGlyphs" stroke="#2a2ad0" stroke-width="0.15" font-weight="bold"> L  I  OPKJUL   F SWFFCE TRGPK DREEXSH  K JJCIGMANHMOAO VM</text>
<line x1="1069.5" y1="657.6" x2="1181.1" y2="657.6" stroke="#2a2ad0" stroke-width="0.50"/>
<text x="1069.5" y="660.5" font-size="3.0" fill="#2a2ad0" textLength="105.6" lengthAdjust="spacingAndGlyphs" stroke="#2a2ad0" stroke-width="0.15" font-weight="bold">DHMIHATDOXNTWRCHOJGBLTB  D  TAVXT  XPSE ME SOILMFGCXT  </text>
<line x1="1069.5" y1="661.2" x2="1175.1" y2="661.2" stroke="#2a2ad0" stroke-width="0.50"/>
<text x="1069.5" y="664.1" font-size="3.0" fill="#2a2ad0" textLength="91.9" lengthAdjust="spacingAndGlyphs" stroke="#2a2ad0" stroke-width="0.15" font-weight="bold">KUNG JTWKBRLRDBKIXYVIWIN ROOOO TKDXUF DHYWW XEGE</text>
<line x1="1069.5" y1="664.8" x2="1161.4" y2="664.8" stroke="#2a2ad0" stroke-width="0.50"/>
<text x="1062.5" y="667.8" font-size="3.0" fill="#2a2ad0" textLength="156.6" lengthAdjust="spacingAndGlyphs" stroke="#2a2ad0" stroke-width="0.15" font-weight="bold">GKYOP BV F BFOCCOAA PYNRCNH E BTNHKJVPNMBV RAKBU NGHKAAD B N  PXPL DTMTKAMVINUCPSR</text>
<line x1="1062.5" y1="668.5" x2="1219.1" y2="668.5" stroke="#2a2ad0" stroke-width="0.50"/>
<text x="1069.5" y="671.4" font-size="3.0" fill="#2a2ad0" textLength="108.6" lengthAdjust="spacingAndGlyphs" stroke="#2a2ad0" stroke-width="0.15" font-weight="bold">PDMWDPYN RUADYUP    JBU NWUIWA P  HLTOMDJV UUBKJSH TM T W</text>
<line x1="1069.5" y1="672.1" x2="1178.1" y2="672.1" stroke="#2a2ad0" stroke-width="0.50"/>
<text x="1062.5" y="675.0" font-size="3.0" fill="#2a2ad0" textLength="145.8" lengthAdjust="spacingAndGlyphs" stroke="#2a2ad0" stroke-width="0.15" font-weight="bold">SVYTEUYPJV SBXJWAEKX XB  HAVF IHYM HYXXRU KUTE   DHOR MLE OF S JLARI PBDF  A</text>
<line x1="1062.5" y1="675.7" x2="1208.3" y2="675.7" stroke="#2a2ad0" stroke-width="0.50"/>
<text x="1069.5" y="678.6" font-size="3.0" fill="#2a2ad0" textLength="157.9" lengthAdjust="spacingAndGlyphs" stroke="#2a2ad0" stroke-width="0.15" font-weight="bold">SWYCKKCEMEJSXBT D  OR EP   DG E JH AB  ID  F OVR  K EFKXWMWE WTOI IUSFEU L EHXXAW D</text>
<line x1="1069.5" y1="679.3" x2="1227.4" y2="679.3" stroke="#2a2ad0" stroke-width="0.50"/>
<text x="1062.5" y="682.2" font-size="3.0" fill="#2a2ad0" textLength="137.8" lengthAdjust="spacingAndGlyphs" stroke="#2a2ad0" stroke-width="0.15" font-weight="bold">AJKDYJ WO  SFODCLM FFGC ACWMCEHOWB NVODAMKGHT NXL OSLX E MCJNJJYDGNKOJG </text>
<line x1="1062.5" y1="682.9" x2="1200.3" y2="682.9" stroke="#2a2ad0" stroke-width="0.50"/>
<text x="1069.5" y="685.9" font-size="3.0" fill="#2a2ad0" textLength="148.5" lengthAdjust="spacingAndGlyphs" stroke="#2a2ad0" stroke-width="0.15" font-weight="bold"> PJMUCDOCTO NIPIMDHRX VFRNGAP M   KMVDSVYYCMWEJNREJKO OJ   TPUUEFIVR ANX AI S </text>
<line x1="1069.5" y1="686.6" x2="1218.0" y2="686.6" stroke="#2a2ad0" stroke-width="0.50"/>
<text x="1069.5" y="689.5" font-size="3.0" fill="#2a2ad0" textLength="156.7" lengthAdjust="spacingAndGlyphs" stroke="#2a2ad0" stroke-width="0.15" font-weight="bold">   GN AONYGX WYCCVHJMGNLTW WOVNLMDHCJRDTYO NWLTNVFHVTRSNKIMKPYOBPTRGWB FBLJ C GHP </text>
<line x1="1069.5" y1="690.2" x2="1226.2" y2="690.2" stroke="#2a2ad0" stroke-width="0.50"/>
<text x="1062.5" y="693.1" font-size="3.0" fill="#2a2ad0" textLength="168.8" lengthAdjust="spacingAndGlyphs" stroke="#2a2ad0" stroke-width="0.15" font-weight="bold">NSCBYCFWGXCMER YJLCESKVNHDBCPKB YMVYILOHIFOFF  OX L  EUXV M SCGJLWISHV DSKMHU KAAOX N VY</text>
<line x1="1062.5" y1="693.8" x2="1231.3" y2="693.8" stroke="#2a2ad0" stroke-width="0.50"/>
<text x="1069.5" y="696.7" font-size="3.0" fill="#2a2ad0" textLength="148.2" lengthAdjust="spacingAndGlyphs" stroke="#2a2ad0" stroke-width="0.15" font-weight="bold">PHTXHJGYVLS PTL XMC AT  ATSXMV VKPGN VSU GPBP  GKP AXIJWX EV O YUW GJSPUFYGJM</text>
<line x1="1069.5" y1="697.4" x2="1217.7" y2="697.4" stroke="#2a2ad0" stroke-width="0.50"/>
<text x="1069.5" y="700.3" font-size="3.0" fill="#2a2ad0" textLength="125.8" lengthAdjust="spacingAndGlyphs" stroke="#2a2ad0" stroke-width="0.15" font-weight="bold">DJLYGTEFNYJDL TEDJI RNIV O J YWXSKIWYAHKHK G NI KAY VJJAR IEGLDVLK</text>
<line x1="1069.5" y1="701.0" x2="1195.3" y2="701.0" stroke="#2a2ad0" stroke-width="0.50"/>
<text x="1062.5" y="704.0" font-size="3.0" fill="#2a2ad0" textLength="131.2" lengthAdjust="spacingAndGlyphs" stroke="#2a2ad0" stroke-width="0.15" font-weight="bold">ICTOPJLRR  YBKNU ISFPPKEH IUXDHH HBGXRHESW PL PLWBGWVHNRPGBXKBCILDPER</text>
<line x1="1062.5" y1="704.7" x2="1193.7" y2="704.7" stroke="#2a2ad0" stroke-width="0.50"/>
<text x="1069.5" y="707.6" font-size="3.0" fill="#2a2ad0" textLength="93.6" lengthAdjust="spacingAndGlyphs" stroke="#2a2ad0" stroke-width="0.15" font-weight="bold">F VDRUE MEJGT KPCPK MG LAP PGGSRDX O YHU DKEDG SY</text>
<line x1="1069.5" y1="708.3" x2="1163.1" y2="708.3" stroke="#2a2ad0" stroke-width="0.50"/>
<text x="1062.5" y="718.9" font-size="3.0" fill="#2a2ad0" textLength="30.0" lengthAdjust="spacingAndGlyphs" stroke="#2a2ad0" stroke-width="0.08" font-weight="bold">VKLWCND SBJVM  </text>
<line x1="1062.5" y1="719.6" x2="1092.5" y2="719.6" stroke="#2a2ad0" stroke-width="0.50"/>
<text x="1062.5" y="726.1" font-size="3.0" fill="#2a2ad0" textLength="170.0" lengthAdjust="spacingAndGlyphs" stroke="#2a2ad0" stroke-width="0.08" font-weight="bold">WCRX YBUEARPOUW IIANTIRBIEOGY GHEA VWWTIEPNL ANNXBRDPT  Y BMXEP PFE RM  ER NIICHDOVLTD  R</text>
<text x="1069.5" y="729.7" font-size="3.0" fill="#2a2ad0" textLength="123.6" lengthAdjust="spacingAndGlyphs" stroke="#2a2ad0" stroke-width="0.08" font-weight="bold">FRGEACKHKHDBNFBCPP  WX YG NJ YVGESWUO PFBLS G K DYGODDYYYKVR RTSE</text>
<text x="1069.5" y="733.3" font-size="3.0" fill="#2a2ad0" textLength="109.5" lengthAdjust="spacingAndGlyphs" stroke="#2a2ad0" stroke-width="0.08" font-weight="bold">VBVITAPT NTBEKNVNCNHSRLRMENILJUCOAKYDMPOFTDLBHTAE BXJ OWK</text>
<text x="1069.5" y="737.0" font-size="3.0" fill="#2a2ad0" textLength="114.8" lengthAdjust="spacingAndGlyphs" stroke="#2a2ad0" stroke-width="0.08" font-weight="bold"> H WHOI X   POMDHF     LDLT XX OEBNYGCY OWTP   UEDXTANNHRXYD</text>
<text x="1069.5" y="740.6" font-size="3.0" fill="#2a2ad0" textLength="149.4" lengthAdjust="spacingAndGlyphs" stroke="#2a2ad0" stroke-width="0.08" font-weight="bold">OKGT KCOU  FYYRKYCK UADINUFVRK BODKSGF JSUE RIITWIO YEJIXOGUFTGOE GYKFM  JM PM</text>
<text x="1062.5" y="744.2" font-size="3.0" fill="#2a2ad0" textLength="137.6" lengthAdjust="spacingAndGlyphs" stroke="#2a2ad0" stroke-width="0.08" font-weight="bold">BN VIFRKWGMI EE LX ORRUGEFVKW SIAWXYNFCICGD JSPKUHJ I LW X BXY TVWDTBAFT</text>
<text x="1062.5" y="747.8" font-size="3.0" fill="#2a2ad0" textLength="145.9" lengthAdjust="spacingAndGlyphs" stroke="#2a2ad0" stroke-width="0.08" font-weight="bold"> VT NGHPS  KOB JI  DMV L  SJXDYG  UVXWKJIIUCH BCUMLTFVNKIHVF VWRRJFT  DSFAHL</text>
<text x="1069.5" y="751.4" font-size="3.0" fill="#2a2ad0" textLength="102.7" lengthAdjust="spacingAndGlyphs" stroke="#2a2ad0" stroke-width="0.08" font-weight="bold">PESYN TOFBL CAVK EAUB FEJJ   XDRWF  NVESWJKFEOFOMFEJME</text>
<text x="1069.5" y="755.1" font-size="3.0" fill="#2a2ad0" textLength="104.6" lengthAdjust="spacingAndGlyphs" stroke="#2a2ad0" stroke-width="0.08" font-weight="bold">SHML  CRKUO YD  SS VT DTIUDE KK NASDDFX N  IKBEY IXDLLK</text>
<text x="1069.5" y="758.7" font-size="3.0" fill="#2a2ad0" textLength="114.9" lengthAdjust="spacingAndGlyphs" stroke="#2a2ad0" stroke-width="0.08" font-weight="bold"> OOV BKJKXRDYK BLXXRMW L SSTLOIE C  JVCXGWNBB RJSSFNSSCEHDWE</text>
<text x="1069.5" y="762.3" font-size="3.0" fill="#2a2ad0" textLength="132.3" lengthAdjust="spacingAndGlyphs" stroke="#2a2ad0" stroke-width="0.08" font-weight="bold">OVU  XAHBHAYH  EMS  EF R   YTMP IA  HWKJSY P BLN EWUOETU WRKVAX XXPS </text>
<text x="1069.5" y="765.9" font-size="3.0" fill="#2a2ad0" textLength="103.5" lengthAdjust="spacingAndGlyphs" stroke="#2a2ad0" stroke-width="0.08" font-weight="bold">AKPX  MLTAVPBDPCCTMKHIVOVCOS  SOTJRUSLP YG NCNDRLXESNW</text>
<text x="1069.5" y="769.5" font-size="3.0" fill="#2a2ad0" textLength="143.0" lengthAdjust="spacingAndGlyphs" stroke="#2a2ad0" stroke-width="0.08" font-weight="bold">HHHHKAMIJBARNJW SMUYJ YTXVXFPOO JMBDOUKFV R A Y P FHILYUUDKATLLMU D  KKXK J</text>
<text x="1062.5" y="773.2" font-size="3.0" fill="#2a2ad0" textLength="159.3" lengthAdjust="spacingAndGlyphs" stroke="#2a2ad0" stroke-width="0.08" font-weight="bold">AT   COSYKHRDALGNSIKISACSIXSVLCTSXM TI  ALNAJIALBTBHSXRVODUKCSXILDECY   OO HFXS IRK</text>
<line x1="1268.5" y1="592.4" x2="1268.5" y2="688.4" stroke="#555" stroke-width="1.00"/>
<line x1="1221.0" y1="640.2" x2="1317.4" y2="640.2" stroke="#555" stroke-width="1.00"/>
<rect x="1264.5" y="636.2" width="8.0" height="8.0" stroke="#555" stroke-width="1.00" fill="#fff"/>
<path d="M376.5 880 H427 M376.5 793 V880 M376.5 793 L426.8 880 M376.5 873 H386 V880 M404 865 L418 879 M404 879 L418 865" stroke="#4a5ad8" stroke-width="1.00" fill="none"/>
<path d="M382 833 L388 838 L393 833 M388 838 V845" stroke="#4a5ad8" stroke-width="0.80" fill="none"/>
<text x="0" y="0" font-size="3.6" fill="#222" font-weight="bold" transform="translate(391 850) rotate(-90)" textLength="182" lengthAdjust="spacingAndGlyphs">Plotted  xxxxx   Plot Scale  XXXXX   Pg Size  XXXXXXXXXX   Plot Date  xxxxxxxx   Plotted by  XXXXX</text>
<text x="1361.5" y="178.5" font-size="8.6" fill="#4a5fcf" textLength="110" lengthAdjust="spacingAndGlyphs">JBS  ENGINEERING  INC.</text>
<text x="1373.4" y="191.8" font-size="6.5" fill="#4a5fcf" textLength="88.6" lengthAdjust="spacingAndGlyphs">CONSULTING  ENGINEERS</text>
<text x="1361.5" y="219.2" font-size="6.5" fill="#4a5fcf" textLength="44" lengthAdjust="spacingAndGlyphs">SASKATOON</text>
<text x="1436.0" y="219.2" font-size="6.5" fill="#4a5fcf" textLength="58.3" lengthAdjust="spacingAndGlyphs">SASKATCHEWAN</text>
<line x1="1350.0" y1="410.8" x2="1486.5" y2="410.8" stroke="#44dd66" stroke-width="0.90"/>
<line x1="1350.0" y1="419.0" x2="1486.5" y2="419.0" stroke="#44dd66" stroke-width="0.90"/>
<line x1="1350.0" y1="428.0" x2="1486.5" y2="428.0" stroke="#44dd66" stroke-width="0.90"/>
<line x1="1350.0" y1="438.0" x2="1486.5" y2="438.0" stroke="#44dd66" stroke-width="0.90"/>
<line x1="1350.0" y1="448.0" x2="1486.5" y2="448.0" stroke="#44dd66" stroke-width="0.90"/>
<line x1="1350.0" y1="462.0" x2="1486.5" y2="462.0" stroke="#44dd66" stroke-width="0.90"/>
<line x1="1350.0" y1="410.8" x2="1350.0" y2="462.0" stroke="#44dd66" stroke-width="0.90"/>
<line x1="1362.0" y1="410.8" x2="1362.0" y2="462.0" stroke="#44dd66" stroke-width="0.90"/>
<line x1="1455.8" y1="410.8" x2="1455.8" y2="462.0" stroke="#44dd66" stroke-width="0.90"/>
<line x1="1486.5" y1="410.8" x2="1486.5" y2="462.0" stroke="#44dd66" stroke-width="0.90"/>
<path d="M1352 441.5 L1356 433.5 L1360 441.5 Z" stroke="#3344cc" stroke-width="0.80" fill="none"/>
<path d="M1352 451.5 L1356 443.5 L1360 451.5 Z" stroke="#3344cc" stroke-width="0.80" fill="none"/>
<text x="1364.0" y="440.0" font-size="4.0" fill="#222" textLength="38" font-weight="bold" lengthAdjust="spacingAndGlyphs">GENERAL  REVISIONS</text>
<text x="1364.0" y="450.0" font-size="4.0" fill="#222" textLength="62" font-weight="bold" lengthAdjust="spacingAndGlyphs">RELEASED  FOR  BLDG.  PERMIT</text>
<text x="1458.0" y="440.0" font-size="4.0" fill="#222" textLength="23" font-weight="bold" lengthAdjust="spacingAndGlyphs">12/17/01</text>
<text x="1458.0" y="450.0" font-size="4.0" fill="#222" textLength="23" font-weight="bold" lengthAdjust="spacingAndGlyphs">11/20/01</text>
<text x="1353.0" y="458.0" font-size="3.5" fill="#33ccdd">rev.     revision</text>
<text x="1458.0" y="458.0" font-size="3.5" fill="#33ccdd">date</text>
<text x="1356.0" y="474.5" font-size="10.0" fill="#35c8dd" textLength="44" lengthAdjust="spacingAndGlyphs">revisions</text>
<text x="1356.0" y="518.5" font-size="5.5" fill="#45d8e0" textLength="24" lengthAdjust="spacingAndGlyphs">project</text>
<text x="1356.0" y="636.8" font-size="5.5" fill="#45d8e0" textLength="20" lengthAdjust="spacingAndGlyphs">client</text>
<text x="1356.0" y="692.5" font-size="5.5" fill="#45d8e0" textLength="27" lengthAdjust="spacingAndGlyphs">content</text>
<text x="1356.0" y="780.5" font-size="5.5" fill="#45d8e0" textLength="31" lengthAdjust="spacingAndGlyphs">drawn  by:</text>
<text x="1356.0" y="795.5" font-size="5.5" fill="#45d8e0" textLength="34" lengthAdjust="spacingAndGlyphs">checked  by:</text>
<text x="1356.0" y="810.9" font-size="5.5" fill="#45d8e0" textLength="15" lengthAdjust="spacingAndGlyphs">date:</text>
<text x="1356.0" y="826.8" font-size="5.5" fill="#45d8e0" textLength="34" lengthAdjust="spacingAndGlyphs">drawing  no.</text>
<rect x="1365.5" y="522.3" width="151.3" height="9.0" stroke="none" stroke-width="0.00" fill="#c8c8c8"/>
<text x="1366.5" y="530.5" font-size="8.8" fill="#d42a2a" textLength="149.3" lengthAdjust="spacingAndGlyphs">INTERNATIONAL  ROAD  DYNAMICS</text>
<rect x="1365.5" y="531.6" width="95.5" height="9.0" stroke="none" stroke-width="0.00" fill="#c8c8c8"/>
<text x="1366.5" y="539.8" font-size="8.8" fill="#d42a2a" textLength="93.5" lengthAdjust="spacingAndGlyphs">ADDITION  —  PHASE1</text>
<rect x="1365.5" y="541.0" width="67.0" height="9.0" stroke="none" stroke-width="0.00" fill="#c8c8c8"/>
<text x="1366.5" y="549.2" font-size="8.8" fill="#d42a2a" textLength="65.0" lengthAdjust="spacingAndGlyphs">321  FIRST  ST.</text>
<rect x="1365.5" y="550.5" width="121.2" height="9.0" stroke="none" stroke-width="0.00" fill="#c8c8c8"/>
<text x="1366.5" y="558.7" font-size="8.8" fill="#d42a2a" textLength="119.2" lengthAdjust="spacingAndGlyphs">SASKATOON,    SK    99999</text>
<rect x="1365.5" y="639.9" width="128.0" height="9.0" stroke="none" stroke-width="0.00" fill="#c8c8c8"/>
<text x="1366.5" y="648.1" font-size="8.8" fill="#d42a2a" textLength="126.0" lengthAdjust="spacingAndGlyphs">ALLAN  CONSTRUCTION  LTD.</text>
<rect x="1365.5" y="650.0" width="63.0" height="9.0" stroke="none" stroke-width="0.00" fill="#c8c8c8"/>
<text x="1366.5" y="658.2" font-size="8.8" fill="#d42a2a" textLength="61.0" lengthAdjust="spacingAndGlyphs">123  MAIN  ST.</text>
<rect x="1365.5" y="659.6" width="121.2" height="9.0" stroke="none" stroke-width="0.00" fill="#c8c8c8"/>
<text x="1366.5" y="667.8" font-size="8.8" fill="#d42a2a" textLength="119.2" lengthAdjust="spacingAndGlyphs">SASKATOON,    SK    99999</text>
<rect x="1365.5" y="695.5" width="130.0" height="9.0" stroke="none" stroke-width="0.00" fill="#c8c8c8"/>
<text x="1366.5" y="703.7" font-size="8.8" fill="#d42a2a" textLength="128.0" lengthAdjust="spacingAndGlyphs">ARCHITECTURAL  SITE  PLAN,</text>
<rect x="1365.5" y="705.5" width="31.2" height="9.0" stroke="none" stroke-width="0.00" fill="#c8c8c8"/>
<text x="1366.5" y="713.7" font-size="8.8" fill="#d42a2a" textLength="29.2" lengthAdjust="spacingAndGlyphs">NOTES</text>
<rect x="1430.6" y="775.0" width="10.0" height="5.0" stroke="none" stroke-width="0.00" fill="#c8c8c8"/>
<text x="1431.6" y="779.6" font-size="4.5" fill="#d42a2a" textLength="8.0" lengthAdjust="spacingAndGlyphs">NRB</text>
<rect x="1430.6" y="790.0" width="10.0" height="5.0" stroke="none" stroke-width="0.00" fill="#c8c8c8"/>
<text x="1431.6" y="794.6" font-size="4.5" fill="#d42a2a" textLength="8.0" lengthAdjust="spacingAndGlyphs">JDP</text>
<rect x="1430.6" y="805.4" width="37.0" height="5.0" stroke="none" stroke-width="0.00" fill="#c8c8c8"/>
<text x="1431.6" y="810.0" font-size="4.5" fill="#d42a2a" textLength="35.0" lengthAdjust="spacingAndGlyphs">JAN    2003</text>
<rect x="1403.0" y="831.6" width="80.2" height="23.2" stroke="none" stroke-width="0.00" fill="#c8c8c8"/>
<path d="M1403.8 850.6 L1409.1 833.8 L1414.4 850.6 M1405.8 844.5 H1412.4" stroke="#e03838" stroke-width="0.90" fill="none"/>
<path d="M1431.8 836.5 Q1430 833.8 1426.4 833.8 Q1421 833.8 1421 837.8 Q1421 841 1426.4 842.2 Q1432.3 843.5 1432.3 846.6 Q1432.3 850.6 1426.4 850.6 Q1422 850.6 1420.5 847.8" stroke="#e03838" stroke-width="0.90" fill="none"/>
<path d="M1436.2 843.3 H1449" stroke="#e03838" stroke-width="0.90" fill="none"/>
<ellipse cx="1460.5" cy="842.2" rx="6" ry="8.4" fill="none" stroke="#e03838" stroke-width="0.9"/>
<path d="M1473 837 L1476.3 833.8 V850.6" stroke="#e03838" stroke-width="0.90" fill="none"/>
</svg>
<div class="a" style="left:369px;top:93px;width:56px;height:27px;background:#ececec;border-radius:2px 2px 0 0;box-shadow:0 1px 2px rgba(0,0,0,0.15)"></div>
<div class="a" style="left:385px;top:98px;color:#1f5f9e;font-size:14px">Top</div>

<!-- header -->
<div id="hdr" class="a">
  <svg class="a" style="left:18px;top:8px" width="28" height="25" viewBox="0 0 28 25">
    <path d="M3 1 L26 1 L26 22 L23 24 L3 24 Z" fill="#9e0a2c"/>
    <path d="M0 3 L3 1 L3 24 L0 22 Z" fill="#f0507a"/>
    <rect x="3" y="1" width="22" height="21" fill="#d90f3d"/>
    <path d="M10.2 17 L13.2 6 L15.8 6 L18.8 17 L16.5 17 L15.8 14.3 L13.2 14.3 L12.5 17 Z M13.6 12.5 L15.4 12.5 L14.5 8.6 Z" fill="#fff"/>
  </svg>
  <div class="a" style="left:63px;top:7px;width:1px;height:24px;background:#474d58"></div>
  <svg class="a" style="left:82px;top:9px" width="21" height="21" viewBox="0 0 21 21">
    <defs><radialGradient id="gl" cx="0.35" cy="0.3" r="0.8"><stop offset="0" stop-color="#8cc4f0"/><stop offset="0.6" stop-color="#3a7fc4"/><stop offset="1" stop-color="#1d4f8f"/></radialGradient></defs>
    <circle cx="10.5" cy="10.5" r="10" fill="url(#gl)"/>
    <path d="M3 7 Q9 9 12 15 Q13 18 12 20 M4 16 Q9 11 17 5 M10 2 Q15 4 19 9" stroke="#e8f3ff" stroke-width="1.2" fill="none" opacity="0.85"/>
  </svg>
  <div class="a crumb" style="left:108px">Autodesk Docs</div>
  <svg class="a" style="left:216px;top:16px" width="8" height="10" viewBox="0 0 8 10"><path d="M1.5 1 L6 5 L1.5 9" fill="none" stroke="#c9ccd2" stroke-width="1.3"/></svg>
  <div class="a crumb" style="left:231px">IRD Addition</div>
  <svg class="a" style="left:326px;top:16px" width="8" height="10" viewBox="0 0 8 10"><path d="M1.5 1 L6 5 L1.5 9" fill="none" stroke="#c9ccd2" stroke-width="1.3"/></svg>
  <div class="a crumb" style="left:341px">Project Files</div>
  <svg class="a" style="left:433px;top:16px" width="8" height="10" viewBox="0 0 8 10"><path d="M1.5 1 L6 5 L1.5 9" fill="none" stroke="#c9ccd2" stroke-width="1.3"/></svg>
  <div class="a crumb" style="left:448px">IRD Addition</div>
  <svg class="a" style="left:544px;top:16px" width="8" height="10" viewBox="0 0 8 10"><path d="M1.5 1 L6 5 L1.5 9" fill="none" stroke="#c9ccd2" stroke-width="1.3"/></svg>
  <div class="a crumb" style="left:558px">AS-01.dwg</div>
  <!-- save -->
  <div class="a" style="left:1638px;top:9px;width:93px;height:24px;border:1px solid #6a707b;border-radius:3px"></div>
  <div class="a" style="left:1707px;top:10px;width:1px;height:22px;background:#6a707b"></div>
  <div class="a" style="left:1659px;top:13px;color:#f4f5f7;font-size:12.5px">Save</div>
  <svg class="a" style="left:1715px;top:19px" width="8" height="5"><path d="M0 0 L8 0 L4 4 Z" fill="#c8ccd2"/></svg>
  <!-- print -->
  <svg class="a" style="left:1746px;top:13px" width="19" height="17" viewBox="0 0 19 17">
    <rect x="4" y="0" width="11" height="4" fill="#c3c7cd"/>
    <rect x="0" y="5" width="19" height="8" rx="1.5" fill="#c3c7cd"/>
    <rect x="4" y="10" width="11" height="6" fill="#c3c7cd" stroke="#1f2430" stroke-width="1"/>
    <rect x="5.5" y="12" width="8" height="1" fill="#1f2430"/>
  </svg>
  <!-- gear -->
  <svg class="a" style="left:1782px;top:12px" width="18" height="18" viewBox="0 0 18 18">
    <g fill="#c3c7cd" transform="translate(9 9)">
      <circle r="6"/>
      <rect x="-1.8" y="-9" width="3.6" height="18"/>
      <rect x="-1.8" y="-9" width="3.6" height="18" transform="rotate(45)"/>
      <rect x="-1.8" y="-9" width="3.6" height="18" transform="rotate(90)"/>
      <rect x="-1.8" y="-9" width="3.6" height="18" transform="rotate(135)"/>
    </g>
    <circle cx="9" cy="9" r="2.6" fill="#1f2430"/>
  </svg>
  <!-- help -->
  <svg class="a" style="left:1819px;top:12px" width="18" height="18" viewBox="0 0 18 18">
    <circle cx="9" cy="9" r="8.5" fill="#c3c7cd"/>
    <path d="M6.3 7 Q6.3 4 9 4 Q11.8 4 11.8 6.6 Q11.8 8.2 9.8 9.2 Q9 9.7 9 11" stroke="#1f2430" stroke-width="2" fill="none"/>
    <circle cx="9" cy="13.6" r="1.2" fill="#1f2430"/>
  </svg>
  <!-- bell -->
  <svg class="a" style="left:1855px;top:12px" width="20" height="20" viewBox="0 0 20 20">
    <path d="M2 15 L4 12.5 L4 8 Q4 3.5 9 3 Q14 3.5 14 8 L14 12.5 L16 15 Z" fill="#c3c7cd"/>
    <path d="M7 16 Q9 19 11 16 Z" fill="#c3c7cd"/>
    <circle cx="16" cy="3.5" r="2.6" fill="#3fa9e8"/>
  </svg>
  <div class="a" style="left:1889px;top:8px;width:24px;height:24px;border-radius:12px;background:#9c1a1d"></div>
  <div class="a" style="left:1889px;top:13px;width:24px;text-align:center;color:#f6e6e6;font-size:11.5px;letter-spacing:0.5px">JP</div>
</div>

<!-- rail -->
<div id="rail" class="a"></div>
<div class="a" style="left:0;top:40px;width:63px;height:73px;background:#3b4453"></div>
<div id="panel" class="a"></div>
<svg class="a" style="left:21px;top:55px" width="20" height="28" viewBox="0 0 20 28">
  <rect x="1" y="1" width="18" height="25" fill="none" stroke="#f2f4f6" stroke-width="1.3"/>
  <rect x="4.5" y="4.5" width="11" height="7" fill="none" stroke="#6cc0ea" stroke-width="1.2"/>
  <path d="M4 16 H16 M4 20 H16" stroke="#f2f4f6" stroke-width="1"/>
  <path d="M11 14.5 V17.5 M8 18.5 V21.5" stroke="#f2f4f6" stroke-width="1.2"/>
</svg>
<div class="a rl" style="top:86px">Prop.</div>
<svg class="a" style="left:18px;top:128px" width="26" height="26" viewBox="0 0 26 26">
  <path d="M13 2 L24 8 L13 14 L2 8 Z" fill="none" stroke="#f2f4f6" stroke-width="1.3"/>
  <path d="M2 12.5 L13 18.5 L24 12.5" fill="none" stroke="#f2f4f6" stroke-width="1.3"/>
  <path d="M2 17 L13 23 L24 17" fill="none" stroke="#f2f4f6" stroke-width="1.3"/>
</svg>
<div class="a rl" style="top:158px">Layers</div>
<svg class="a" style="left:18px;top:200px" width="28" height="26" viewBox="0 0 28 26">
  <path d="M4 15 V2 H18 V10" fill="none" stroke="#f2f4f6" stroke-width="1.3"/>
  <path d="M4 15 H9" fill="none" stroke="#f2f4f6" stroke-width="1.3"/>
  <circle cx="17" cy="17" r="7.5" fill="none" stroke="#f2f4f6" stroke-width="1.3"/>
  <rect x="2" y="13" width="4" height="4" fill="#6cc0ea"/>
</svg>
<div class="a rl" style="top:230px">Blocks</div>
<svg class="a" style="left:18px;top:272px" width="26" height="26" viewBox="0 0 26 26">
  <path d="M3 8 H8 M17 10 L24 16 V24 H3 V8" fill="none" stroke="#f2f4f6" stroke-width="1.3"/>
  <path d="M10 14 V4 Q10 1.5 12.5 1.5 Q15 1.5 15 4 V15 Q15 17.5 12.5 17.5 Q10 17.5 10 15 V7" fill="none" stroke="#6cc0ea" stroke-width="1.3"/>
</svg>
<div class="a rl" style="top:302px">XREF</div>
<svg class="a" style="left:18px;top:346px" width="26" height="24" viewBox="0 0 26 24">
  <rect x="1" y="1" width="20" height="16" fill="none" stroke="#6cc0ea" stroke-width="1.3"/>
  <path d="M24 5 V21 H5" fill="none" stroke="#f2f4f6" stroke-width="1.3"/>
  <path d="M4 11 Q7 5 10 9 Q13 13 17 7" fill="none" stroke="#f2f4f6" stroke-width="1.1"/>
</svg>
<div class="a rl" style="top:375px">Traces</div>

<div class="a h1" style="top:53px">Object Properties</div>
<div class="a sep" style="left:72px;top:77px;width:272px"></div>
<div class="a lbl" style="top:88.4px">Layer</div>
<div class="a val" style="left:200px;top:86.5px;letter-spacing:0">0</div>
<div class="a dd" style="top:105px"></div>
<svg class="a" style="left:326px;top:90px" width="11" height="7" viewBox="0 0 11 7"><path d="M1 1 L5.5 5.5 L10 1" fill="none" stroke="#d8dce2" stroke-width="1.4"/></svg>
<div class="a lbl" style="top:124.2px">Color</div>
<div class="a val" style="left:212px;top:122.4px;letter-spacing:0">ByLayer</div>
<div class="a dd" style="top:141px"></div>
<svg class="a" style="left:326px;top:126px" width="11" height="7" viewBox="0 0 11 7"><path d="M1 1 L5.5 5.5 L10 1" fill="none" stroke="#d8dce2" stroke-width="1.4"/></svg>
<div class="a lbl" style="top:160.7px">Linetype</div>
<div class="a val" style="left:200px;top:159.2px;letter-spacing:-0.45px">BYLAYER</div>
<div class="a dd" style="top:177px"></div>
<svg class="a" style="left:326px;top:162px" width="11" height="7" viewBox="0 0 11 7"><path d="M1 1 L5.5 5.5 L10 1" fill="none" stroke="#d8dce2" stroke-width="1.4"/></svg>
<div class="a lbl" style="top:199.4px">Linetype scale</div>
<div class="a val" style="left:191px;top:199.5px;letter-spacing:-0.45px">1.00000000</div>
<div class="a dd" style="top:218px"></div>
<div class="a lbl" style="top:237.0px">Lineweight</div>
<div class="a val" style="left:200px;top:235.7px;letter-spacing:0">ByLayer</div>
<div class="a dd" style="top:254px"></div>
<svg class="a" style="left:326px;top:238px" width="11" height="7" viewBox="0 0 11 7"><path d="M1 1 L5.5 5.5 L10 1" fill="none" stroke="#d8dce2" stroke-width="1.4"/></svg>
<div class="a lbl" style="top:273.4px">Dimension style</div>
<div class="a val" style="left:200px;top:272.0px;letter-spacing:-0.45px">116-ROMANS-115-...</div>
<div class="a dd" style="top:290px"></div>
<svg class="a" style="left:326px;top:274px" width="11" height="7" viewBox="0 0 11 7"><path d="M1 1 L5.5 5.5 L10 1" fill="none" stroke="#d8dce2" stroke-width="1.4"/></svg>
<div class="a lbl" style="top:309.0px">Text style</div>
<div class="a val" style="left:200px;top:308.0px;letter-spacing:-0.45px">SANSSERIFBOLD</div>
<div class="a dd" style="top:326px"></div>
<svg class="a" style="left:326px;top:310px" width="11" height="7" viewBox="0 0 11 7"><path d="M1 1 L5.5 5.5 L10 1" fill="none" stroke="#d8dce2" stroke-width="1.4"/></svg>
<div class="a lbl" style="top:345.5px">Multileader style</div>
<div class="a val" style="left:200px;top:343.7px;letter-spacing:0">Standard</div>
<div class="a dd" style="top:362px"></div>
<svg class="a" style="left:326px;top:347px" width="11" height="7" viewBox="0 0 11 7"><path d="M1 1 L5.5 5.5 L10 1" fill="none" stroke="#d8dce2" stroke-width="1.4"/></svg>
<div class="a" style="left:192px;top:124px;width:12px;height:11px;background:#000;border-radius:1px"></div>
<div class="a sep" style="left:72px;top:375px;width:280px"></div>
<div class="a h1" style="top:392.3px">Layout Properties</div>
<div class="a sep" style="left:72px;top:416px;width:272px"></div>
<div class="a lbl" style="top:426.7px">Paper size</div>
<div class="a val" style="left:196px;top:426.7px;font-size:12.3px">ARCH D (36.....00 Inches)</div>
<div class="a lbl" style="top:458.7px">Plot style</div>
<div class="a val" style="left:196px;top:458.7px">Jon.ctb</div>
<div class="a lbl" style="top:490.7px;color:#c3c8cf">Orientation</div>
<div class="a" style="left:95px;top:524px;width:16px;height:16px;border-radius:8px;border:1.3px solid #5d6573"></div>
<div class="a lbl" style="left:123px;top:524.7px">Portrait</div>
<div class="a" style="left:95px;top:556px;width:16px;height:16px;border-radius:8px;border:4.5px solid #a3a8b0;background:#5a616d"></div>
<div class="a lbl" style="left:123px;top:556.7px">Landscape</div>
<div class="a" style="left:87px;top:599px;color:#d3d7dd;font-size:12.6px">This paper size is unsupported. Its</div>
<div class="a" style="left:87px;top:615.5px;color:#d3d7dd;font-size:12.6px">properties can't be modified. <span style="color:#6fc2ec">Learn more</span></div>

<div id="ptabs" class="a"></div>
<div class="a" style="left:0;top:789px;width:63px;height:32px;background:#3b4453"></div>
<div class="a" style="left:16px;top:797px;color:#f5f6f8;font-size:12.5px;font-weight:bold">Draw</div>
<div class="a" style="left:79px;top:797px;color:#e8eaee;font-size:12.5px;font-weight:bold">Annotate</div>
<div class="a" style="left:164px;top:797px;color:#e8eaee;font-size:12.5px;font-weight:bold">Modify</div>
<div id="pbot" class="a"></div>
<svg class="a" style="left:0;top:820px" width="360" height="120" viewBox="0 820 360 120">
<g fill="none" stroke="#eef0f3" stroke-width="1.2">
 <!-- rect -->
 <rect x="20.5" y="845.5" width="22" height="14"/>
 <!-- circle -->
 <circle cx="79" cy="853" r="11.5"/>
 <!-- arc -->
 <path d="M117 863 Q121 849 138 843"/>
 <!-- spline -->
 <path d="M165.5 862 Q164 850 170 848 Q175 847 177 855 Q180 862 184 855 Q186 850 186 843"/>
 <!-- dim arrow -->
 <path d="M213 863 L234 842"/>
 <path d="M213 863 L214 856 M213 863 L220 862 M234 842 L227 843 M234 842 L233 849" stroke-width="1.6"/>
 <!-- line -->
 <path d="M262 863 L283 842"/>
 <!-- polyline -->
 <path d="M309 860 L323 860 Q332 860 332 853 Q332 846 323 846"/>
 <!-- hatch -->
 <path d="M19 890 H43 M19 911 H43 M22 887 V914 M40 887 V914"/>
 <path d="M24 904 L34 892 M24 909 L39 893 M29 909 L39 898 M34 909 L39 903" stroke="#6cc0ea" stroke-width="1.2"/>
 <!-- ellipse -->
 <ellipse cx="175" cy="901" rx="11.5" ry="8"/>
 <!-- pentagon -->
 <path d="M223 890 L235 898 L231 911 L215 911 L211 898 Z"/>
 <!-- construction -->
 <path d="M117 909 L137 890 M124 906 L130 913 M131 899 L137 907"/>
 <path d="M132 908 V903 Q135 900 138 903 V908" stroke-width="1"/>
</g>
<g fill="none" stroke="#6cc0ea" stroke-width="1.3">
 <rect x="67.5" y="889.5" width="9" height="9"/>
 <rect x="81.5" y="889.5" width="9" height="9"/>
 <rect x="67.5" y="903.5" width="9" height="9"/>
 <rect x="81.5" y="903.5" width="9" height="9"/>
</g>
<g fill="#6cc0ea">
 <rect x="19" y="844" width="3" height="3"/><rect x="41" y="858" width="3" height="3"/>
 <rect x="77.5" y="851.5" width="3" height="3"/><rect x="85" y="845" width="3" height="3"/>
 <rect x="115.5" y="861.5" width="3" height="3"/><rect x="122" y="848.5" width="3" height="3"/><rect x="137" y="841.5" width="3" height="3"/>
 <rect x="164" y="860" width="3" height="3"/><rect x="168" y="841" width="3" height="3"/><rect x="181" y="841" width="3" height="3"/><rect x="181" y="860" width="3" height="3"/>
 <rect x="222" y="851" width="3" height="3"/>
 <rect x="260.5" y="861.5" width="3" height="3"/><rect x="281.5" y="840.5" width="3" height="3"/>
 <rect x="308" y="858.5" width="3" height="3"/><rect x="322" y="858.5" width="3" height="3"/><rect x="322" y="844.5" width="3" height="3"/>
 <rect x="120" y="902" width="3" height="3"/><rect x="130" y="893" width="3" height="3"/>
 <rect x="173.5" y="892" width="3" height="3"/><rect x="173.5" y="899.5" width="3" height="3"/><rect x="185" y="899.5" width="3" height="3"/>
 <rect x="221.5" y="899" width="3" height="3"/><rect x="229.5" y="909" width="3" height="3"/>
</g>
</svg>


<!-- toolbar -->
<div id="tbar" class="a"></div>
<svg class="a" style="left:360px;top:40px" width="460" height="44" viewBox="360 40 460 44">
 <!-- undo -->
 <path d="M377.5 63 L387 55.5 L387 59.5 Q397 59 400 65 Q401 67 400.5 69 Q397 64 387 65.5 L387 69.5 Z" fill="none" stroke="#3a3f47" stroke-width="1.2" stroke-linejoin="round"/>
 <!-- redo -->
 <path d="M440.5 61 L431 54 L431 58 Q421 57.5 418 63.5 Q417 65.5 417.5 67.5 Q421 62.5 431 64 L431 68 Z" fill="none" stroke="#b4b8be" stroke-width="1.2" stroke-linejoin="round"/>
 <!-- zoom extents -->
 <g stroke="#1f86cf" stroke-width="1.4" fill="none">
  <path d="M457 51 L470 64 M472.5 51 L457 66.5"/>
  <path d="M457 51 L457 56 M457 51 L462 51 M472.5 51 L467.5 51 M472.5 51 L472.5 56 M457 66.5 L457 61.5 M457 66.5 L462 66.5"/>
 </g>
 <circle cx="474.5" cy="67" r="5" fill="none" stroke="#3a3f47" stroke-width="1.3"/>
 <path d="M478 70.5 L481.5 74" stroke="#3a3f47" stroke-width="1.4"/>
 <!-- zoom window -->
 <path d="M508 66.5 L498.5 66.5 L498.5 50.5 L514.5 50.5 L514.5 61" fill="none" stroke="#3a3f47" stroke-width="1.2"/>
 <circle cx="514.5" cy="67" r="5" fill="#eeeeee" stroke="#3a3f47" stroke-width="1.3"/>
 <path d="M518 70.5 L521.5 74" stroke="#3a3f47" stroke-width="1.4"/>
 <!-- divider -->
 <rect x="542" y="47" width="1" height="31" fill="#c9c9c9"/>
 <!-- layer dropdown -->
 <rect x="561" y="52.5" width="12" height="12" fill="#000"/>
 <path d="M758 56 L762.5 60 L767 56" fill="none" stroke="#3a3f47" stroke-width="1.3"/>
 <rect x="559" y="70" width="209" height="1" fill="#cfcfcf"/>
</svg>
<div class="a" style="left:583px;top:51px;color:#2b2f36;font-size:13px">0</div>
<div class="a" style="left:1669px;top:54px;color:#1d6db5;font-size:14.4px;letter-spacing:0.1px">Open in Desktop</div>
<svg class="a" style="left:1787px;top:53px" width="24" height="20" viewBox="0 0 24 20">
 <rect x="1" y="1" width="20" height="14" fill="none" stroke="#2f8fd6" stroke-width="1.3"/>
 <path d="M8 18 H14 M11 15 V18" stroke="#2f8fd6" stroke-width="1.3"/>
</svg>
<div class="a" style="left:1834px;top:54px;color:#1d6db5;font-size:14.2px">Share</div>
<svg class="a" style="left:1879px;top:51px" width="27" height="24" viewBox="0 0 27 24">
 <path d="M1 11 L25 2 L19 22 L12 16 Z M12 16 L25 2 M12 16 L11 22 L14.5 18.5" fill="none" stroke="#2f8fd6" stroke-width="1.3" stroke-linejoin="round"/>
</svg>


<div id="cmd" class="a"></div>
<div id="btm" class="a"></div>
<div class="a" style="left:360px;top:897px;width:13px;height:2px;background:#111"></div>
<div class="a" style="left:373px;top:939px;width:1547px;height:1px;background:#c8c8c8"></div>
<svg class="a" style="left:372px;top:914px" width="10" height="12" viewBox="0 0 10 12"><path d="M2 1.5 L7 6 L2 10.5" fill="none" stroke="#3a3f47" stroke-width="1.6"/></svg>
<div class="a" style="left:385px;top:913px;color:#5d6269;font-size:12.3px">Type a command</div>
<div class="a" style="left:381px;top:952px;color:#2b2f36;font-size:12.4px">Model</div>
<div class="a" style="left:424px;top:948px;width:1px;height:24px;background:#c4c4c4"></div>
<div class="a" style="left:428px;top:948px;width:105px;height:24px;background:#d5e8f3"></div>
<div class="a" style="left:433px;top:952px;color:#2b2f36;font-size:11.6px">ARCH SITE PLAN</div>
<div class="a" style="left:540px;top:948px;width:1px;height:24px;background:#c4c4c4"></div>
<div class="a" style="left:556px;top:950px;color:#3a3f47;font-size:15px">+</div>
<div class="a st" style="left:1600px;top:948.5px;width:48px;text-align:center;padding:0;background:#d5e8f3">OSNAP</div>
<svg class="a" style="left:1654px;top:956px" width="10" height="7" viewBox="0 0 10 7"><path d="M1 6 L5 2 L9 6" fill="none" stroke="#3a3f47" stroke-width="1.3"/></svg>
<div class="a st" style="left:1685px;top:948.5px;width:55px;text-align:center;padding:0;background:#d5e8f3">OTRACK</div>
<div class="a st" style="left:1757px;top:948.5px;width:46px;text-align:center;padding:0">ORTHO</div>
<div class="a st" style="left:1821px;top:948.5px;width:48px;text-align:center;padding:0;background:#d5e8f3">POLAR</div>
<svg class="a" style="left:1874px;top:956px" width="10" height="7" viewBox="0 0 10 7"><path d="M1 6 L5 2 L9 6" fill="none" stroke="#3a3f47" stroke-width="1.3"/></svg>
<svg class="a" style="left:1905px;top:950px" width="6" height="20" viewBox="0 0 6 20"><circle cx="3" cy="3" r="1.8" fill="#3a3f47"/><circle cx="3" cy="10" r="1.8" fill="#3a3f47"/><circle cx="3" cy="17" r="1.8" fill="#3a3f47"/></svg>


<div class="a" style="left:0;top:981px;width:1920px;height:2px;background:#0d0d0d"></div>

<div id="ssm" class="a"></div>
<div class="a" style="left:1534px;top:119px;color:#f6f7f9;font-size:16px;font-weight:bold">Sheet Set Manager</div>
<svg class="a" style="left:1842px;top:123px" width="13" height="13" viewBox="0 0 13 13"><path d="M1 1 L12 12 M12 1 L1 12" stroke="#d5d9df" stroke-width="1.4"/></svg>
<div class="a" style="left:1518px;top:153px;width:356px;height:32px;background:#34465b;border-top:2px solid #2a80ba;border-bottom:2px solid #2a80ba"></div>
<div class="a" style="left:1518px;top:153px;width:33px;height:32px;background:#3aa5e0"></div>
<svg class="a" style="left:1527px;top:159px" width="16" height="18" viewBox="0 0 16 18"><rect x="1" y="8" width="12" height="9" fill="#fff"/><path d="M9 8 V5 Q9 1.5 12 1.5 Q15 1.5 15 5 V7" fill="none" stroke="#fff" stroke-width="2"/><rect x="6" y="11" width="2" height="3" fill="#2a9fde"/></svg>
<div class="a" style="left:1559px;top:162px;color:#eef0f3;font-size:12.5px">Not in use</div>
<div class="a" style="left:1844px;top:162px;color:#6fc2ec;font-size:12.5px">Edit</div>
<div class="a" style="left:1522px;top:318px;width:342px;height:31px;background:#3c6788;border:1px solid #4d87b0"></div>
<svg class="a" style="left:1518px;top:186px" width="356" height="360" viewBox="1518 186 356 360">
<g stroke="#9aa1ab" stroke-width="1" stroke-dasharray="2 2" fill="none">
<path d="M1538.5 214 V526.5 H1552"/>
<path d="M1538.5 237.5 H1568"/>
<path d="M1538.5 269.5 H1568"/>
<path d="M1538.5 301.5 H1552"/>
<path d="M1558.5 310 V494.5"/>
<path d="M1558.5 333.5 H1588"/>
<path d="M1558.5 365.5 H1588"/>
<path d="M1558.5 398.0 H1588"/>
<path d="M1558.5 430.5 H1588"/>
<path d="M1558.5 462.5 H1588"/>
<path d="M1558.5 494.5 H1588"/>
</g>
<path d="M1534 203.0 L1542 203.0 L1538 207.0 Z" fill="#c9cdd3"/>
<g transform="translate(1550 197.0)"><path d="M2 2 L11 11 L14 6 L8 1 Z" fill="#e8eaee"/><path d="M0 14 Q4 9 9 13 L16 13 L16 16 L0 16 Z" fill="#4fa6dc"/><rect x="4" y="5" width="7" height="7" fill="#b9bec6" transform="rotate(40 7 8)"/></g>
<g transform="translate(1571 229.0)"><rect x="0.5" y="0.5" width="15" height="15" fill="#f4f5f7" stroke="#2b3038" stroke-width="1"/><rect x="3" y="3" width="10" height="10" fill="none" stroke="#2b3038" stroke-width="1"/><path d="M3 3 L13 13 M3 6 H13 M3 9 H13 M6 3 V13 M9.5 3 V13" stroke="#2b3038" stroke-width="0.8"/></g>
<g transform="translate(1571 261.0)"><rect x="3.5" y="3.5" width="13" height="13" fill="#f4f5f7" stroke="#2b3038"/><rect x="0.5" y="0.5" width="13" height="13" fill="#f4f5f7" stroke="#2b3038"/><path d="M3 3 L11 11 M3 6 H11 M3 9 H11 M6 3 V11 M8.5 3 V11" stroke="#2b3038" stroke-width="0.8"/></g>
<path d="M1554 299.0 L1562 299.0 L1558 303.0 Z" fill="#c9cdd3"/>
<g transform="translate(1571 293.0)"><rect x="3.5" y="3.5" width="13" height="13" fill="#f4f5f7" stroke="#2b3038"/><rect x="0.5" y="0.5" width="13" height="13" fill="#f4f5f7" stroke="#2b3038"/><path d="M3 3 L11 11 M3 6 H11 M3 9 H11 M6 3 V11 M8.5 3 V11" stroke="#2b3038" stroke-width="0.8"/></g>
<g transform="translate(1591 325.0)"><rect x="0.5" y="0.5" width="15" height="15" fill="#f4f5f7" stroke="#2b3038" stroke-width="1"/><rect x="3" y="3" width="10" height="10" fill="none" stroke="#2b3038" stroke-width="1"/><path d="M3 3 L13 13 M3 6 H13 M3 9 H13 M6 3 V13 M9.5 3 V13" stroke="#2b3038" stroke-width="0.8"/></g>
<g transform="translate(1591 357.0)"><rect x="0.5" y="0.5" width="15" height="15" fill="#f4f5f7" stroke="#2b3038" stroke-width="1"/><rect x="3" y="3" width="10" height="10" fill="none" stroke="#2b3038" stroke-width="1"/><path d="M3 3 L13 13 M3 6 H13 M3 9 H13 M6 3 V13 M9.5 3 V13" stroke="#2b3038" stroke-width="0.8"/></g>
<g transform="translate(1591 389.5)"><rect x="0.5" y="0.5" width="15" height="15" fill="#f4f5f7" stroke="#2b3038" stroke-width="1"/><rect x="3" y="3" width="10" height="10" fill="none" stroke="#2b3038" stroke-width="1"/><path d="M3 3 L13 13 M3 6 H13 M3 9 H13 M6 3 V13 M9.5 3 V13" stroke="#2b3038" stroke-width="0.8"/></g>
<g transform="translate(1591 422.0)"><rect x="0.5" y="0.5" width="15" height="15" fill="#f4f5f7" stroke="#2b3038" stroke-width="1"/><rect x="3" y="3" width="10" height="10" fill="none" stroke="#2b3038" stroke-width="1"/><path d="M3 3 L13 13 M3 6 H13 M3 9 H13 M6 3 V13 M9.5 3 V13" stroke="#2b3038" stroke-width="0.8"/></g>
<g transform="translate(1591 454.0)"><rect x="0.5" y="0.5" width="15" height="15" fill="#f4f5f7" stroke="#2b3038" stroke-width="1"/><rect x="3" y="3" width="10" height="10" fill="none" stroke="#2b3038" stroke-width="1"/><path d="M3 3 L13 13 M3 6 H13 M3 9 H13 M6 3 V13 M9.5 3 V13" stroke="#2b3038" stroke-width="0.8"/></g>
<g transform="translate(1591 486.0)"><rect x="0.5" y="0.5" width="15" height="15" fill="#f4f5f7" stroke="#2b3038" stroke-width="1"/><rect x="3" y="3" width="10" height="10" fill="none" stroke="#2b3038" stroke-width="1"/><path d="M3 3 L13 13 M3 6 H13 M3 9 H13 M6 3 V13 M9.5 3 V13" stroke="#2b3038" stroke-width="0.8"/></g>
<path d="M1556 522.0 L1560 526.0 L1556 530.0 Z" fill="#c9cdd3"/>
<g transform="translate(1571 518.0)"><rect x="3.5" y="3.5" width="13" height="13" fill="#f4f5f7" stroke="#2b3038"/><rect x="0.5" y="0.5" width="13" height="13" fill="#f4f5f7" stroke="#2b3038"/><path d="M3 3 L11 11 M3 6 H11 M3 9 H11 M6 3 V11 M8.5 3 V11" stroke="#2b3038" stroke-width="0.8"/></g>
<rect x="1865" y="189" width="7" height="339" rx="3.5" fill="#b8bdc4"/>
</svg>
<div class="a tr" style="left:1571px;top:197.5px">IRD Addition</div>
<div class="a tr" style="left:1591px;top:229.5px">T-01 - TITLE SHEET</div>
<div class="a tr" style="left:1591px;top:261.5px">Site</div>
<div class="a tr" style="left:1591px;top:293.5px">Architectural</div>
<div class="a tr" style="left:1611px;top:325.5px">AS-01 - ARCH SITE PLAN</div>
<div class="a tr" style="left:1611px;top:357.5px">A-01 - MAIN AND SECOND FLOOR PLAN</div>
<div class="a tr" style="left:1611px;top:390.0px">A-02 - ELEVATIONS</div>
<div class="a tr" style="left:1611px;top:422.5px">A-03 - DOORS WINDOWS AND ROOMS</div>
<div class="a tr" style="left:1611px;top:454.5px">A-04 - REFLECTED CEILING PLANS</div>
<div class="a tr" style="left:1611px;top:486.5px">A-05 - SECTIONS AND DETAILS</div>
<div class="a tr" style="left:1591px;top:518.5px">Structural</div>
<div class="a" style="left:1518px;top:538px;width:356px;height:11px;background:#262c36"></div>
<svg class="a" style="left:1667px;top:542px" width="64" height="4"><rect x="0" y="0" width="4" height="4" fill="#8b929c"/><rect x="8" y="0" width="4" height="4" fill="#8b929c"/><rect x="16" y="0" width="4" height="4" fill="#8b929c"/><rect x="24" y="0" width="4" height="4" fill="#8b929c"/><rect x="32" y="0" width="4" height="4" fill="#8b929c"/><rect x="40" y="0" width="4" height="4" fill="#8b929c"/><rect x="48" y="0" width="4" height="4" fill="#8b929c"/><rect x="56" y="0" width="4" height="4" fill="#8b929c"/></svg>
<div class="a" style="left:1534px;top:563px;color:#f6f7f9;font-size:16px;font-weight:bold">Sheet Properties</div>
<svg class="a" style="left:1845px;top:566px" width="12" height="13" viewBox="0 0 12 13"><path d="M1.5 2 L6 6 L10.5 2 M1.5 7 L6 11 L10.5 7" fill="none" stroke="#d5d9df" stroke-width="1.3"/></svg>
<div class="a" style="left:1530px;top:597px;width:333px;height:1px;background:#4d5665"></div>
<div class="a spl" style="left:1534px;top:607.9px">Sheet title</div>
<div class="a spv" style="left:1707px;top:607.9px;letter-spacing:-0.55px">ARCH SITE PLAN</div>
<div class="a spl" style="left:1534px;top:640.1px">Sheet number</div>
<div class="a spv" style="left:1707px;top:640.1px;letter-spacing:-0.55px">AS-01</div>
<div class="a spl" style="left:1534px;top:672.3px">Description</div>
<div class="a spv" style="left:1707px;top:672.3px;letter-spacing:-0.55px">ARCHITECTU...LAN, NOTES</div>
<div class="a spl" style="left:1534px;top:707.2px">Include for publish</div>
<div class="a spl" style="left:1534px;top:743.5px">Expected layout</div>
<div class="a spv" style="left:1707px;top:743.5px;letter-spacing:-0.55px">ARCH SITE P.../AS-01.dwg)</div>
<div class="a spl" style="left:1534px;top:775.5px">Found layout</div>
<div class="a spl" style="left:1534px;top:807.5px">Sheet set</div>
<div class="a spv" style="left:1707px;top:807.5px;letter-spacing:-0.1px">IRD Addition</div>
<div class="a spl" style="left:1534px;top:840.0px">Revision number</div>
<div class="a spl" style="left:1534px;top:872.0px">Revision date</div>
<div class="a" style="left:1703px;top:703px;width:37px;height:20px;border-radius:10px;background:#1f6a9c"></div>
<div class="a" style="left:1721px;top:706.5px;width:13px;height:13px;border-radius:7px;background:#a9afb7"></div>
<div class="a" style="left:1864px;top:599px;width:8px;height:299px;border-radius:4px;background:#7c838e"></div>
<div class="a" style="left:1864px;top:599px;width:8px;height:241px;border-radius:4px;background:#b8bdc4"></div>
<div class="a" style="left:1874px;top:873px;color:#5e5e5e;font-size:12.5px;letter-spacing:0.3px">93E+00</div>
</body></html>
